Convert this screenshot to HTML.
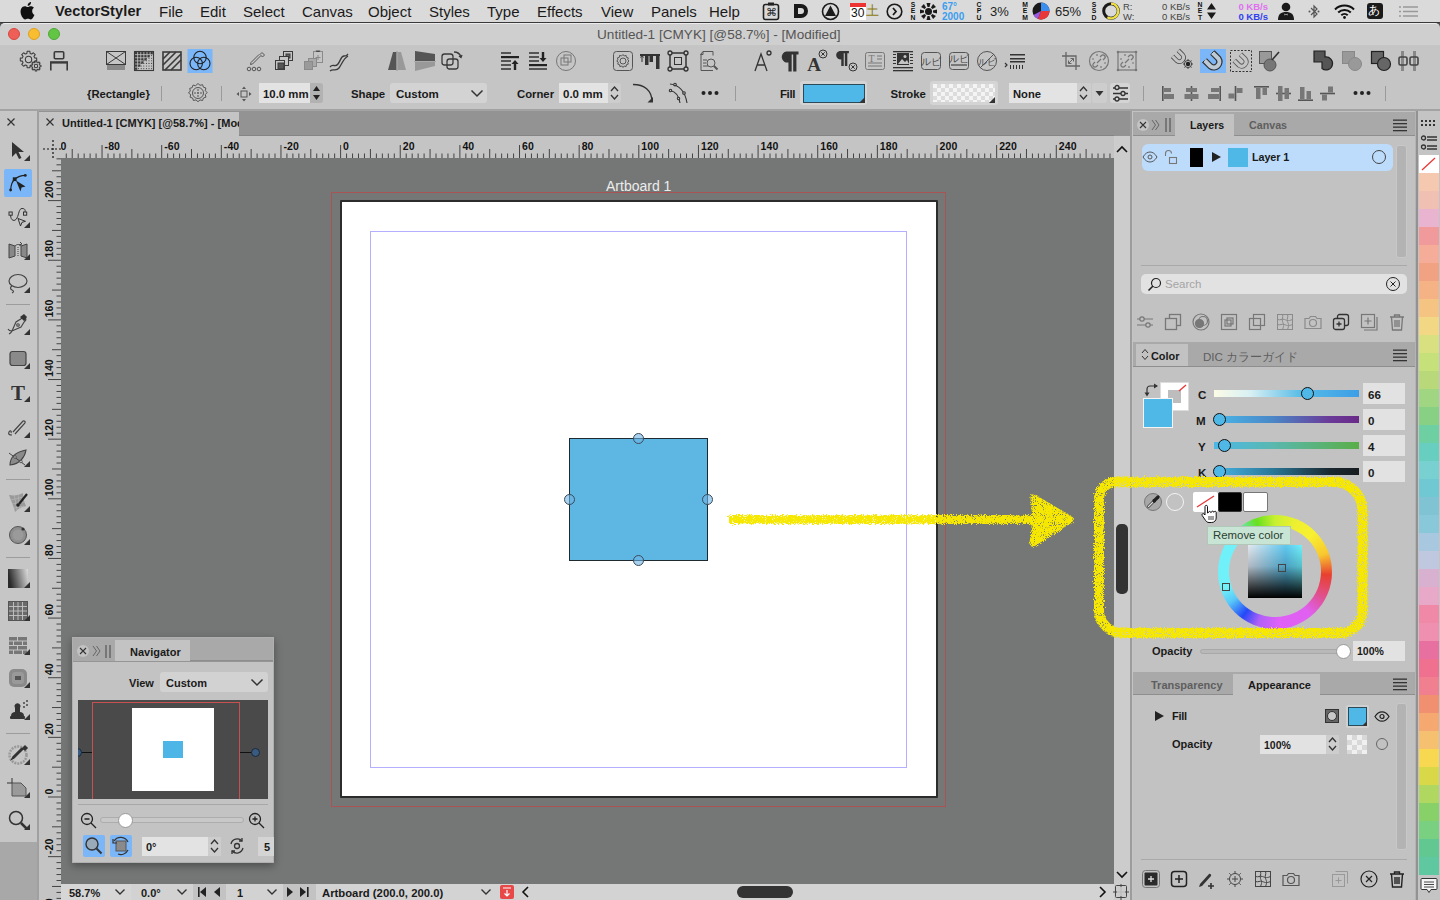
<!DOCTYPE html>
<html><head><meta charset="utf-8">
<style>
*{margin:0;padding:0;box-sizing:border-box}
html,body{width:1440px;height:900px;overflow:hidden;background:#757776}
body{font-family:"Liberation Sans",sans-serif;color:#111;position:relative}
.a{position:absolute}
.t{position:absolute;white-space:nowrap;line-height:1}
svg{position:absolute;overflow:visible}
</style></head><body>

<!-- MENUBAR -->
<div class="a" id="menubar" style="left:0;top:0;width:1440px;height:22px;background:#dadada"></div>
<div class="a" style="left:0;top:22px;width:1440px;height:1px;background:#3a3a3a"></div>


<!-- menubar content -->
<svg style="left:20px;top:2px" width="15" height="17" viewBox="0 0 170 200"><path fill="#111" d="M140 106c0-24 20-36 21-37-12-17-30-19-36-19-15-2-30 9-38 9s-20-9-33-9C37 50 21 60 12 76c-18 31-5 78 13 103 9 12 19 26 32 26 13-1 18-8 33-8s20 8 33 8 22-13 30-25c10-14 14-28 14-29-1 0-27-10-27-45zM116 32c7-8 11-20 10-32-10 0-22 7-29 15-6 7-12 19-10 30 11 1 22-5 29-13z"/></svg>
<div class="t" style="left:55px;top:4px;font-size:14.6px;font-weight:bold;letter-spacing:0.1px;color:#1a1a1a">VectorStyler</div>
<div class="t" style="left:159px;top:4px;font-size:15px;color:#1a1a1a">File</div>
<div class="t" style="left:200px;top:4px;font-size:15px;color:#1a1a1a">Edit</div>
<div class="t" style="left:243px;top:4px;font-size:15px;color:#1a1a1a">Select</div>
<div class="t" style="left:302px;top:4px;font-size:15px;color:#1a1a1a">Canvas</div>
<div class="t" style="left:368px;top:4px;font-size:15px;color:#1a1a1a">Object</div>
<div class="t" style="left:429px;top:4px;font-size:15px;color:#1a1a1a">Styles</div>
<div class="t" style="left:487px;top:4px;font-size:15px;color:#1a1a1a">Type</div>
<div class="t" style="left:537px;top:4px;font-size:15px;color:#1a1a1a">Effects</div>
<div class="t" style="left:601px;top:4px;font-size:15px;color:#1a1a1a">View</div>
<div class="t" style="left:651px;top:4px;font-size:15px;color:#1a1a1a">Panels</div>
<div class="t" style="left:709px;top:4px;font-size:15px;color:#1a1a1a">Help</div>
<!-- status icons -->
<svg style="left:762px;top:2px" width="18" height="18" viewBox="0 0 18 18"><rect x="1.5" y="2.5" width="15" height="15" rx="2" fill="none" stroke="#222" stroke-width="1.6"/><rect x="6" y="0.5" width="6" height="3" fill="#222"/><text x="9" y="14" font-size="11" text-anchor="middle" fill="#222" font-family="Liberation Sans">&#8984;</text></svg>
<svg style="left:793px;top:3px" width="16" height="16" viewBox="0 0 16 16"><path d="M1 1h7a7 7 0 0 1 0 14H1z" fill="#1a1a1a"/><path d="M5 5h3a3 3 0 0 1 0 6H5z" fill="#dadada"/></svg>
<svg style="left:821px;top:2px" width="19" height="19" viewBox="0 0 19 19"><circle cx="9.5" cy="9.5" r="8" fill="none" stroke="#1a1a1a" stroke-width="1.6"/><path d="M9.5 3.5L15 14H4z" fill="#1a1a1a"/></svg>
<div class="a" style="left:850px;top:3px;width:16px;height:17px;background:#fff"></div>
<div class="a" style="left:850px;top:3px;width:16px;height:4px;background:#e33"></div>
<div class="t" style="left:851px;top:7px;font-size:12px;color:#111">30</div>
<div class="t" style="left:866px;top:4px;font-size:13px;color:#8a7a10">&#22303;</div>
<svg style="left:886px;top:3px" width="17" height="17" viewBox="0 0 17 17"><circle cx="8.5" cy="8.5" r="7.3" fill="none" stroke="#1a1a1a" stroke-width="1.6"/><path d="M7 5l3 3.5-3 3.5" fill="none" stroke="#1a1a1a" stroke-width="1.8"/></svg>
<div class="t" style="left:910px;top:2px;font-size:6.8px;font-weight:bold;line-height:6.3px;color:#111;width:6px;text-align:center">S<br>E<br>N</div>
<svg style="left:919px;top:2px" width="19" height="19" viewBox="0 0 19 19"><g fill="#1a1a1a"><circle cx="9.5" cy="9.5" r="3.5"/><g transform="translate(9.5 9.5)"><path d="M-2 -8.5h4l-1 4h-2z"/><path transform="rotate(45)" d="M-2 -8.5h4l-1 4h-2z"/><path transform="rotate(90)" d="M-2 -8.5h4l-1 4h-2z"/><path transform="rotate(135)" d="M-2 -8.5h4l-1 4h-2z"/><path transform="rotate(180)" d="M-2 -8.5h4l-1 4h-2z"/><path transform="rotate(225)" d="M-2 -8.5h4l-1 4h-2z"/><path transform="rotate(270)" d="M-2 -8.5h4l-1 4h-2z"/><path transform="rotate(315)" d="M-2 -8.5h4l-1 4h-2z"/></g></g></svg>
<div class="t" style="left:942px;top:2px;font-size:10px;font-weight:bold;line-height:10px;color:#3a9ef0">67&#176;<br>2000</div>
<div class="t" style="left:976px;top:2px;font-size:6.8px;font-weight:bold;line-height:6.3px;color:#111;width:6px;text-align:center">C<br>P<br>U</div>
<div class="t" style="left:990px;top:5px;font-size:13px;color:#222">3%</div>
<div class="t" style="left:1022px;top:2px;font-size:6.8px;font-weight:bold;line-height:6.3px;color:#111;width:6px;text-align:center">M<br>E<br>M</div>
<svg style="left:1032px;top:2px" width="18" height="18" viewBox="0 0 18 18"><circle cx="9" cy="9" r="8.5" fill="#1a1a1a"/><path d="M9 9V0.5A8.5 8.5 0 0 1 17.5 9z" fill="#3a8ef0"/><path d="M9 9H17.5A8.5 8.5 0 0 1 6 17z" fill="#e8383a"/><path d="M9 9L6 17A8.5 8.5 0 0 1 1.5 13z" fill="#9a5ae0"/></svg>
<div class="t" style="left:1055px;top:5px;font-size:13px;color:#222">65%</div>
<div class="t" style="left:1091px;top:2px;font-size:6.8px;font-weight:bold;line-height:6.3px;color:#111;width:6px;text-align:center">S<br>S<br>D</div>
<svg style="left:1102px;top:2px" width="18" height="18" viewBox="0 0 18 18"><circle cx="9" cy="9" r="7.3" fill="none" stroke="#1a1a1a" stroke-width="3"/><path d="M9 1.7A7.3 7.3 0 1 1 5.35 15.32" fill="none" stroke="#f0e040" stroke-width="2.2"/></svg>
<div class="t" style="left:1123px;top:2px;font-size:9.5px;line-height:9.5px;color:#444">R:<br>W:</div>
<div class="t" style="left:1160px;top:2px;font-size:9.5px;line-height:9.5px;color:#444;text-align:right;width:30px">0 KB/s<br>0 KB/s</div>
<div class="t" style="left:1197px;top:2px;font-size:6.8px;font-weight:bold;line-height:6.3px;color:#111;width:6px;text-align:center">N<br>E<br>T</div>
<svg style="left:1207px;top:3px" width="9" height="16" viewBox="0 0 9 16"><path d="M4.5 0L9 6.5H0z M0 9.5H9L4.5 16z" fill="#1a1a1a"/></svg>
<div class="t" style="left:1236px;top:2px;font-size:9.5px;font-weight:bold;line-height:9.5px;text-align:right;width:32px"><span style="color:#e070f0">0 KB/s</span><br><span style="color:#3040f0">0 KB/s</span></div>
<svg style="left:1277px;top:2px" width="18" height="18" viewBox="0 0 18 18"><circle cx="9" cy="5" r="4.3" fill="#1a1a1a"/><path d="M1 18c0-6 3-8 8-8s8 2 8 8z" fill="#1a1a1a"/><path d="M7.5 11.5l1.5 1 1.5-1v2l-1.5-1-1.5 1z" fill="#dadada"/></svg>
<svg style="left:1308px;top:4px" width="12" height="15" viewBox="0 0 12 15"><path d="M3 4l6 6-3 3V2l3 3-6 6" fill="none" stroke="#555" stroke-width="1.2"/><circle cx="1.5" cy="7.5" r="1" fill="#555"/><circle cx="10.5" cy="7.5" r="1" fill="#555"/></svg>
<svg style="left:1334px;top:4px" width="21" height="15" viewBox="0 0 21 15"><path d="M1 5.5a13.5 13.5 0 0 1 19 0" fill="none" stroke="#111" stroke-width="2"/><path d="M4.2 8.5a9 9 0 0 1 12.6 0" fill="none" stroke="#111" stroke-width="2"/><path d="M7.3 11.3a4.6 4.6 0 0 1 6.4 0" fill="none" stroke="#111" stroke-width="2"/><circle cx="10.5" cy="13.5" r="1.4" fill="#111"/></svg>
<div class="a" style="left:1367px;top:3px;width:16px;height:16px;background:#1a1a1a;border-radius:3px"></div>
<div class="t" style="left:1368px;top:4px;font-size:12px;color:#fff">&#12354;</div>
<svg style="left:1399px;top:6px" width="19" height="11" viewBox="0 0 19 11"><g stroke="#999" stroke-width="1.3"><path d="M0 1h2M4 1h15M0 5.5h2M4 5.5h15M0 10h2M4 10h15"/></g></svg>

<!-- WINDOW TITLE -->
<div class="a" style="left:0;top:23px;width:1440px;height:6px;background:#505050"></div>
<div class="a" style="left:0;top:23px;width:1440px;height:22px;background:#cfcfcf;border-radius:5px 5px 0 0;border-top:1px solid #ececec"></div>


<!-- title content -->
<div class="a" style="left:8px;top:28px;width:12px;height:12px;border-radius:50%;background:#ee5f57;border:0.5px solid #d8473f"></div>
<div class="a" style="left:28px;top:28px;width:12px;height:12px;border-radius:50%;background:#f8bd30;border:0.5px solid #dea123"></div>
<div class="a" style="left:48px;top:28px;width:12px;height:12px;border-radius:50%;background:#62c544;border:0.5px solid #50a935"></div>
<div class="t" style="left:597px;top:28px;font-size:13.6px;color:#555">Untitled-1 [CMYK] [@58.7%] - [Modified]</div>

<!-- TOOLBAR -->
<div class="a" style="left:0;top:45px;width:1440px;height:64px;background:#c5c5c5"></div>
<div class="a" style="left:0;top:109px;width:1440px;height:2px;background:#a3a3a3"></div>

<!-- TB1 -->
<svg style="left:18.0px;top:48px" width="26" height="26" viewBox="0 0 26 26"><g fill="none" stroke="#3a3a3a" stroke-width="1.05" stroke-linejoin="round"><path d="M16.59 9.89L18.69 10.14L18.69 12.86L16.59 13.11L15.95 14.66L17.25 16.33L15.33 18.25L13.66 16.95L12.11 17.59L11.86 19.69L9.14 19.69L8.89 17.59L7.34 16.95L5.67 18.25L3.75 16.33L5.05 14.66L4.41 13.11L2.31 12.86L2.31 10.14L4.41 9.89L5.05 8.34L3.75 6.67L5.67 4.75L7.34 6.05L8.89 5.41L9.14 3.31L11.86 3.31L12.11 5.41L13.66 6.05L15.33 4.75L17.25 6.67L15.95 8.34z" fill="#c5c5c5"/><circle cx="10.5" cy="11.5" r="3.2"/><path d="M21.58 17.05L22.93 17.18L22.93 18.82L21.58 18.95L21.20 19.86L22.07 20.91L20.91 22.07L19.86 21.20L18.95 21.58L18.82 22.93L17.18 22.93L17.05 21.58L16.14 21.20L15.09 22.07L13.93 20.91L14.80 19.86L14.42 18.95L13.07 18.82L13.07 17.18L14.42 17.05L14.80 16.14L13.93 15.09L15.09 13.93L16.14 14.80L17.05 14.42L17.18 13.07L18.82 13.07L18.95 14.42L19.86 14.80L20.91 13.93L22.07 15.09L21.20 16.14z" fill="#c5c5c5"/><circle cx="18" cy="18" r="1.7"/></g></svg>
<svg style="left:46.0px;top:48px" width="26" height="26" viewBox="0 0 26 26"><g fill="none" stroke="#3a3a3a" stroke-width="1.6"><rect x="8.3" y="3.8" width="9.4" height="7" rx="1"/><path d="M4.8 22.5v-8.3h16.4v8.3"/></g><rect x="4" y="13.4" width="18" height="2.2" fill="#3a3a3a"/></svg>
<svg style="left:102.5px;top:48px" width="26" height="26" viewBox="0 0 26 26"><g fill="none" stroke="#3a3a3a" stroke-width="1"><rect x="3.5" y="3.5" width="19" height="13"/><path d="M3.5 3.5l19 13M22.5 3.5l-19 13"/></g><rect x="4" y="17" width="18" height="5" fill="#8a8a8a"/></svg>
<svg style="left:130.5px;top:48px" width="26" height="26" viewBox="0 0 26 26"><rect x="3.5" y="3.5" width="19" height="19" fill="none" stroke="#3a3a3a" stroke-width="1.1"/><rect x="4.0" y="4.0" width="2.3" height="2.3" fill="#3a3a3a"/><rect x="4.0" y="7.1" width="2.3" height="2.3" fill="#3a3a3a"/><rect x="4.0" y="10.2" width="2.3" height="2.3" fill="#3a3a3a"/><rect x="4.0" y="13.3" width="2.3" height="2.3" fill="#3a3a3a"/><rect x="4.0" y="16.4" width="2.3" height="2.3" fill="#3a3a3a"/><rect x="4.0" y="19.5" width="2.3" height="2.3" fill="#3a3a3a"/><rect x="7.1" y="4.0" width="2.3" height="2.3" fill="#3a3a3a"/><rect x="7.1" y="7.1" width="2.3" height="2.3" fill="#3a3a3a"/><rect x="7.1" y="10.2" width="2.3" height="2.3" fill="#3a3a3a"/><rect x="7.1" y="13.3" width="2.3" height="2.3" fill="#3a3a3a"/><rect x="7.1" y="16.4" width="2.3" height="2.3" fill="#3a3a3a"/><rect x="10.2" y="4.0" width="2.3" height="2.3" fill="#3a3a3a"/><rect x="10.2" y="7.1" width="2.3" height="2.3" fill="#3a3a3a"/><rect x="10.2" y="10.2" width="2.3" height="2.3" fill="#3a3a3a"/><rect x="10.2" y="13.3" width="2.3" height="2.3" fill="#3a3a3a"/><rect x="13.3" y="4.0" width="2.3" height="2.3" fill="#3a3a3a"/><rect x="13.3" y="7.1" width="2.3" height="2.3" fill="#3a3a3a"/><rect x="13.3" y="10.2" width="2.3" height="2.3" fill="#3a3a3a"/><rect x="16.4" y="4.0" width="2.3" height="2.3" fill="#3a3a3a"/><rect x="16.4" y="7.1" width="2.3" height="2.3" fill="#3a3a3a"/><rect x="19.5" y="4.0" width="2.3" height="2.3" fill="#3a3a3a"/><circle cx="5.0" cy="20.6" r="0.55" fill="#3a3a3a"/><circle cx="7.6" cy="18.0" r="0.55" fill="#3a3a3a"/><circle cx="7.6" cy="20.6" r="0.55" fill="#3a3a3a"/><circle cx="10.2" cy="15.4" r="0.55" fill="#3a3a3a"/><circle cx="10.2" cy="18.0" r="0.55" fill="#3a3a3a"/><circle cx="10.2" cy="20.6" r="0.55" fill="#3a3a3a"/><circle cx="12.8" cy="12.8" r="0.55" fill="#3a3a3a"/><circle cx="12.8" cy="15.4" r="0.55" fill="#3a3a3a"/><circle cx="12.8" cy="18.0" r="0.55" fill="#3a3a3a"/><circle cx="12.8" cy="20.6" r="0.55" fill="#3a3a3a"/><circle cx="15.4" cy="10.2" r="0.55" fill="#3a3a3a"/><circle cx="15.4" cy="12.8" r="0.55" fill="#3a3a3a"/><circle cx="15.4" cy="15.4" r="0.55" fill="#3a3a3a"/><circle cx="15.4" cy="18.0" r="0.55" fill="#3a3a3a"/><circle cx="15.4" cy="20.6" r="0.55" fill="#3a3a3a"/><circle cx="18.0" cy="7.6" r="0.55" fill="#3a3a3a"/><circle cx="18.0" cy="10.2" r="0.55" fill="#3a3a3a"/><circle cx="18.0" cy="12.8" r="0.55" fill="#3a3a3a"/><circle cx="18.0" cy="15.4" r="0.55" fill="#3a3a3a"/><circle cx="18.0" cy="18.0" r="0.55" fill="#3a3a3a"/><circle cx="18.0" cy="20.6" r="0.55" fill="#3a3a3a"/><circle cx="20.6" cy="5.0" r="0.55" fill="#3a3a3a"/><circle cx="20.6" cy="7.6" r="0.55" fill="#3a3a3a"/><circle cx="20.6" cy="10.2" r="0.55" fill="#3a3a3a"/><circle cx="20.6" cy="12.8" r="0.55" fill="#3a3a3a"/><circle cx="20.6" cy="15.4" r="0.55" fill="#3a3a3a"/><circle cx="20.6" cy="18.0" r="0.55" fill="#3a3a3a"/><circle cx="20.6" cy="20.6" r="0.55" fill="#3a3a3a"/></svg>
<svg style="left:158.5px;top:48px" width="26" height="26" viewBox="0 0 26 26"><g fill="none" stroke="#3a3a3a" stroke-width="1.6"><rect x="4" y="4" width="18" height="18"/><path d="M4 11L11 4M4 17L17 4M6 22L22 6M12 22l10-10"/></g></svg>
<svg style="left:186.5px;top:48px" width="26" height="26" viewBox="0 0 26 26"><rect x="0.5" y="1" width="25" height="24" fill="#7ab6f8"/><g fill="none" stroke="#222" stroke-width="1.1"><circle cx="13" cy="9.5" r="6.2"/><circle cx="9.2" cy="15.5" r="6.2"/><circle cx="16.8" cy="15.5" r="6.2"/></g></svg>
<svg style="left:243.3px;top:48px" width="26" height="26" viewBox="0 0 26 26"><g fill="none" stroke="#555" stroke-width="1"><path d="M19 4.5l2.5 2.5-2 2-2.5-2.5zM17.5 8l-8 8-2 .5.5-2 8-8"/><circle cx="6" cy="21" r="1.8"/><circle cx="11" cy="21" r="1.8"/><circle cx="16" cy="21" r="1.8"/></g></svg>
<svg style="left:271.0px;top:48px" width="26" height="26" viewBox="0 0 26 26"><g stroke="#3a3a3a" stroke-width="1"><rect x="12.5" y="3.5" width="9" height="9" fill="#c5c5c5"/><rect x="15" y="6" width="4" height="4" fill="#666"/><rect x="8.5" y="8.5" width="9" height="9" fill="#c5c5c5"/><rect x="4.5" y="12.5" width="9" height="9" fill="#c5c5c5"/><rect x="7" y="15" width="6" height="6" fill="#555"/></g></svg>
<svg style="left:299.5px;top:48px" width="26" height="26" viewBox="0 0 26 26"><g stroke="#8a8a8a" stroke-width="1"><rect x="13.5" y="3.5" width="9" height="11" fill="#c5c5c5"/><path d="M16 3.5v-1h4v1M18 7v5M15.5 9.5h5"/><rect x="8.5" y="10.5" width="8" height="8" fill="#aaa"/><rect x="4.5" y="13.5" width="8" height="8" fill="#9a9a9a"/></g></svg>
<svg style="left:326.0px;top:48px" width="26" height="26" viewBox="0 0 26 26"><g fill="none" stroke="#3a3a3a" stroke-width="1.3"><path d="M4 19c3-4 5 1 8-3s3-8 6-8 2 0 4-2M4 23c3-3 6 1 9-3s4-9 9-12"/></g></svg>
<svg style="left:383.7px;top:48px" width="26" height="26" viewBox="0 0 26 26"><path d="M4 22L9 4h3.5v18z" fill="#555"/><path d="M13.5 4H17l5 18h-8.5z" fill="#999"/><path d="M13 3v20" stroke="#999" stroke-width="1"/></svg>
<svg style="left:412.0px;top:48px" width="26" height="26" viewBox="0 0 26 26"><path d="M3 3l20 3v7H3z" fill="#555"/><path d="M3 14h20v4L3 23z" fill="#999"/><path d="M2 13.5h22" stroke="#aaa" stroke-width="1"/></svg>
<svg style="left:438.7px;top:48px" width="26" height="26" viewBox="0 0 26 26"><g fill="none" stroke="#3a3a3a" stroke-width="1.3"><rect x="3" y="6" width="11" height="11" rx="2.5"/><rect x="8" y="11" width="11" height="10" rx="2.5"/><path d="M15 4c4 0 6 2 7 5"/><path d="M20 8l2 1.5 1-2.5"/></g></svg>
<svg style="left:496.7px;top:48px" width="26" height="26" viewBox="0 0 26 26"><g fill="#555"><rect x="4" y="4" width="10" height="2"/><rect x="4" y="8" width="18" height="2.2" fill="#222"/><rect x="4" y="12" width="10" height="2"/><rect x="4" y="16" width="10" height="2"/><rect x="4" y="20" width="10" height="2"/><path d="M18 12l3.5 4h-2.3v6h-2.4v-6h-2.3z" fill="#222"/></g></svg>
<svg style="left:524.5px;top:48px" width="26" height="26" viewBox="0 0 26 26"><g fill="#555"><rect x="4" y="4" width="10" height="2"/><rect x="4" y="8" width="10" height="2"/><rect x="4" y="16" width="18" height="2.2" fill="#222"/><rect x="4" y="12" width="10" height="2"/><rect x="4" y="20" width="18" height="2"/><path d="M18 14l3.5-4h-2.3V4h-2.4v6h-2.3z" fill="#222"/></g></svg>
<svg style="left:552.8px;top:48px" width="26" height="26" viewBox="0 0 26 26"><g fill="none" stroke="#777" stroke-width="1"><circle cx="13" cy="13" r="9.5"/><rect x="8" y="10" width="7" height="7"/><rect x="11" y="7" width="7" height="7"/></g></svg>
<svg style="left:609.5px;top:48px" width="26" height="26" viewBox="0 0 26 26"><g fill="none" stroke="#555" stroke-width="1"><rect x="3.5" y="3.5" width="19" height="19" rx="3"/><circle cx="13" cy="13" r="3"/><path d="M13 6.5l1.2 1.5 1.9-.6.3 1.9 1.9.6-.6 1.9 1.3 1.2-1.3 1.2.6 1.9-1.9.6-.3 1.9-1.9-.6-1.2 1.5-1.2-1.5-1.9.6-.3-1.9-1.9-.6.6-1.9L6.7 13 8 11.8l-.6-1.9 1.9-.6.3-1.9 1.9.6z"/></g></svg>
<svg style="left:637.0px;top:48px" width="26" height="26" viewBox="0 0 26 26"><g fill="#333"><rect x="3" y="6" width="20" height="2"/><rect x="8" y="7" width="3.5" height="10"/><rect x="12.5" y="7" width="3.5" height="7"/><rect x="19" y="7" width="3.5" height="14"/><path d="M5 8v6M3.5 9.5L5 7.5l1.5 2" stroke="#333" stroke-width="1" fill="none"/></g></svg>
<svg style="left:665.3px;top:48px" width="26" height="26" viewBox="0 0 26 26"><g fill="none" stroke="#333" stroke-width="1.5"><rect x="5" y="5" width="16" height="16"/><rect x="9.5" y="9.5" width="7" height="7" stroke-width="1"/></g><g fill="#c5c5c5" stroke="#333" stroke-width="1.3"><circle cx="5" cy="5" r="2"/><circle cx="21" cy="5" r="2"/><circle cx="5" cy="21" r="2"/><circle cx="21" cy="21" r="2"/></g></svg>
<svg style="left:694.5px;top:48px" width="26" height="26" viewBox="0 0 26 26"><g fill="none" stroke="#555" stroke-width="1"><path d="M8 3.5h10v4M6 6.5v16h12"/><path d="M8 3.5L5.5 6.5h2.5z"/><path d="M8 12h4M8 15h3M8 18h5"/><circle cx="16" cy="15" r="4"/><path d="M19 18l3.5 3.5" stroke-width="2"/></g></svg>
<svg style="left:749.5px;top:48px" width="26" height="26" viewBox="0 0 26 26"><g fill="none" stroke="#333" stroke-width="1.3"><path d="M5 23L11 6l6 17M7.5 17h7"/><circle cx="19" cy="5" r="2"/></g></svg>
<svg style="left:777.8px;top:48px" width="26" height="26" viewBox="0 0 26 26"><g transform="translate(1.5 3.5) scale(0.95)"><path d="M7 0h13v3.2h-2.2V21h-3.4V3.2h-1.6V21H9.4V11.5A5.8 5.8 0 0 1 7 0z" fill="#333"/></g></svg>
<svg style="left:803.7px;top:48px" width="26" height="26" viewBox="0 0 26 26"><text x="10" y="23" font-family="Liberation Serif" font-weight="bold" font-size="19" text-anchor="middle" fill="#333">A</text><g fill="none" stroke="#333" stroke-width="1"><circle cx="19" cy="6" r="4"/><path d="M17.3 4.3l3.4 3.4M20.7 4.3l-3.4 3.4"/></g></svg>
<svg style="left:833.7px;top:48px" width="26" height="26" viewBox="0 0 26 26"><g transform="translate(0.5 3) scale(0.72)"><path d="M7 0h13v3.2h-2.2V21h-3.4V3.2h-1.6V21H9.4V11.5A5.8 5.8 0 0 1 7 0z" fill="#333"/></g><g fill="none" stroke="#333" stroke-width="1"><circle cx="19" cy="19" r="4"/><path d="M17.3 17.3l3.4 3.4M20.7 17.3l-3.4 3.4"/></g></svg>
<svg style="left:862.0px;top:48px" width="26" height="26" viewBox="0 0 26 26"><g fill="none" stroke="#777" stroke-width="1"><rect x="3.5" y="4.5" width="19" height="17" rx="2"/><path d="M15 8h5M15 11h5M6 15h14M6 18h14"/></g><text x="9.5" y="14" font-family="Liberation Serif" font-size="10" text-anchor="middle" fill="#777">T</text></svg>
<svg style="left:890.0px;top:48px" width="26" height="26" viewBox="0 0 26 26"><g fill="#333"><rect x="3" y="3" width="20" height="1.3"/><rect x="3" y="19" width="20" height="1.3"/><rect x="3" y="22" width="20" height="1.3"/><rect x="3" y="6" width="3" height="1"/><rect x="20" y="6" width="3" height="1"/><rect x="3" y="9" width="3" height="1"/><rect x="20" y="9" width="3" height="1"/><rect x="3" y="12" width="3" height="1"/><rect x="20" y="12" width="3" height="1"/><rect x="3" y="15" width="3" height="1"/><rect x="20" y="15" width="3" height="1"/><rect x="7" y="5" width="12" height="12"/></g><path d="M8 16l4-5 3 3 2-2 2 4z" fill="#c5c5c5"/><circle cx="15" cy="8.5" r="1.5" fill="#c5c5c5"/></svg>
<svg style="left:917.8px;top:48px" width="26" height="26" viewBox="0 0 26 26"><rect x="3.5" y="4.5" width="19" height="17" rx="3" fill="none" stroke="#555" stroke-width="1"/><text x="13" y="17" font-size="10" text-anchor="middle" fill="#444">&#12523;&#12499;</text></svg>
<svg style="left:946.0px;top:48px" width="26" height="26" viewBox="0 0 26 26"><rect x="3.5" y="4.5" width="19" height="17" rx="3" fill="none" stroke="#555" stroke-width="1"/><text x="13" y="14" font-size="10" text-anchor="middle" fill="#444">&#12523;&#12499;</text><rect x="5" y="16" width="16" height="2" fill="#777"/></svg>
<svg style="left:973.7px;top:48px" width="26" height="26" viewBox="0 0 26 26"><circle cx="13" cy="13" r="9.5" fill="none" stroke="#555" stroke-width="1"/><text x="13" y="17" font-size="9" text-anchor="middle" fill="#444">&#12523;&#12499;</text><path d="M6 20L20 6" stroke="#555" stroke-width="1"/></svg>
<svg style="left:1002.0px;top:48px" width="26" height="26" viewBox="0 0 26 26"><g fill="#333"><rect x="8" y="6" width="15" height="1.5"/><rect x="8" y="10" width="15" height="1.5"/><path d="M8 13h15v1.5H8z"/><rect x="8" y="17" width="1" height="4"/><rect x="11" y="17" width="1" height="4"/><rect x="14" y="17" width="1" height="4"/><rect x="17" y="17" width="1" height="4"/><rect x="20" y="17" width="1" height="4"/><path d="M3 15l2 2-2 2" stroke="#333" fill="none" stroke-width="1.2"/></g></svg>
<svg style="left:1057.8px;top:48px" width="26" height="26" viewBox="0 0 26 26"><g fill="none" stroke="#666" stroke-width="1.3"><path d="M8 4v14h14M4 8h14v14"/><path d="M10.5 15.5l5-5M10.5 12.5v3h3M12.5 10.5h3v3" stroke-width="1"/></g></svg>
<svg style="left:1086.0px;top:48px" width="26" height="26" viewBox="0 0 26 26"><g fill="none" stroke="#777" stroke-width="1.2"><circle cx="13" cy="13" r="9.5"/><path d="M9 14l-1.5 1.5a2 2 0 0 0 3 3L12 17M17 12l1.5-1.5a2 2 0 0 0-3-3L14 9M11 15l4-4M8 11H6M11 8V6M15 18v2M18 15h2"/></g></svg>
<svg style="left:1113.7px;top:48px" width="26" height="26" viewBox="0 0 26 26"><g fill="none" stroke="#777" stroke-width="1.2"><rect x="4" y="4" width="18" height="18"/><path d="M9 14l-1.5 1.5a2 2 0 0 0 3 3L12 17M17 12l1.5-1.5a2 2 0 0 0-3-3L14 9M11 15l4-4M8 11H6M11 8V6M15 18v2M18 15h2"/></g><g fill="#777"><circle cx="4" cy="4" r="1.3"/><circle cx="22" cy="4" r="1.3"/><circle cx="4" cy="22" r="1.3"/><circle cx="22" cy="22" r="1.3"/></g></svg>
<svg style="left:1171.2px;top:48px" width="26" height="26" viewBox="0 0 26 26"><g transform="translate(-2 -1) scale(0.75)"><path d="M12.4 4.6L18.4 10.6A5.6 5.6 0 0 1 10.6 18.4L4.6 12.4" fill="none" stroke="#444" stroke-width="6"/><path d="M12.4 4.6L18.4 10.6A5.6 5.6 0 0 1 10.6 18.4L4.6 12.4" fill="none" stroke="#c5c5c5" stroke-width="4"/></g><g fill="none" stroke="#444" stroke-width="1"><circle cx="17" cy="16" r="3.6"/><path d="M17 11v1.5M17 19.5V21M12 16h1.5M20.5 16H22M13.5 12.5l1 1M19.5 18.5l1 1M13.5 19.5l1-1M19.5 13.5l1-1"/></g><circle cx="17" cy="16" r="2.2" fill="#222"/></svg>
<svg style="left:1199.8px;top:48px" width="26" height="26" viewBox="0 0 26 26"><rect x="0" y="1" width="26" height="24" fill="#7ab6f8"/><path d="M12.4 4.6L18.4 10.6A5.6 5.6 0 0 1 10.6 18.4L4.6 12.4" fill="none" stroke="#333" stroke-width="6.4"/><path d="M12.4 4.6L18.4 10.6A5.6 5.6 0 0 1 10.6 18.4L4.6 12.4" fill="none" stroke="#bccad8" stroke-width="4"/><path d="M11.5 5.5l2.2-2.2M4.5 12.5l-2.2 2.2" stroke="#333" stroke-width="1"/></svg>
<svg style="left:1228.0px;top:48px" width="26" height="26" viewBox="0 0 26 26"><rect x="2.5" y="2.5" width="21" height="21" fill="none" stroke="#333" stroke-width="1" stroke-dasharray="2 1.5"/><g transform="translate(13 13) scale(0.8) translate(-13 -13)"><path d="M12.4 4.6L18.4 10.6A5.6 5.6 0 0 1 10.6 18.4L4.6 12.4" fill="none" stroke="#555" stroke-width="6"/><path d="M12.4 4.6L18.4 10.6A5.6 5.6 0 0 1 10.6 18.4L4.6 12.4" fill="none" stroke="#c5c5c5" stroke-width="4"/></g></svg>
<svg style="left:1255.8px;top:48px" width="26" height="26" viewBox="0 0 26 26"><rect x="3.5" y="3.5" width="12" height="12" fill="#999" stroke="#555" stroke-width="1"/><circle cx="14" cy="17" r="6" fill="#777" stroke="#555" stroke-width="1"/><path d="M16 12L23 4" stroke="#333" stroke-width="1.6"/></svg>
<svg style="left:1311.2px;top:48px" width="26" height="26" viewBox="0 0 26 26"><path d="M3 3h11v6a6.5 6.5 0 1 1-3 11.5V14H3z" fill="#555" stroke="#222" stroke-width="1.2"/></svg>
<svg style="left:1339.4px;top:48px" width="26" height="26" viewBox="0 0 26 26"><rect x="3.5" y="3.5" width="12" height="12" fill="#999" stroke="#888" stroke-width="1"/><circle cx="16" cy="16" r="6.5" fill="#999" stroke="#888" stroke-width="1"/></svg>
<svg style="left:1368.2px;top:48px" width="26" height="26" viewBox="0 0 26 26"><rect x="3.5" y="3.5" width="12" height="12" fill="#666" stroke="#222" stroke-width="1.2"/><circle cx="16" cy="16" r="6.5" fill="#666" stroke="#222" stroke-width="1.2"/></svg>
<svg style="left:1395.8px;top:48px" width="26" height="26" viewBox="0 0 26 26"><g fill="#888"><rect x="5" y="3" width="3" height="20"/><rect x="17" y="3" width="3" height="20"/></g><g fill="none" stroke="#444" stroke-width="1.6"><rect x="3" y="9" width="8" height="8" rx="1.5"/><rect x="14" y="9" width="8" height="8" rx="1.5"/></g></svg>

<!-- /TB1 -->
<!-- TB2 -->
<div class="t" style="left:87px;top:89px;font-size:11px;font-weight:bold;color:#1a1a1a;font-size:11.3px">{Rectangle}</div>
<div class="a" style="left:161px;top:86px;width:1px;height:15px;background:#9a9a9a;"></div>
<svg style="left:187px;top:82px" width="22" height="22" viewBox="0 0 22 22"><g fill="none" stroke="#555" stroke-width="1"><path d="M11 1.5l2 1.8 2.6-.6.8 2.5 2.5.8-.6 2.6 1.8 2-1.8 2 .6 2.6-2.5.8-.8 2.5-2.6-.6-2 1.8-2-1.8-2.6.6-.8-2.5-2.5-.8.6-2.6L1.5 11l1.8-2-.6-2.6 2.5-.8.8-2.5 2.6.6z"/><circle cx="11" cy="11" r="5.5"/></g><g fill="#555"><circle cx="11" cy="11" r="1"/><rect x="10.5" y="7" width="1" height="2"/><rect x="10.5" y="13" width="1" height="2"/><rect x="7" y="10.5" width="2" height="1"/><rect x="13" y="10.5" width="2" height="1"/></g></svg>
<div class="a" style="left:221px;top:86px;width:1px;height:15px;background:#9a9a9a;"></div>
<svg style="left:236px;top:86px" width="16" height="16" viewBox="0 0 16 16"><g fill="#555"><rect x="5" y="5" width="6" height="6" fill="none" stroke="#555" stroke-width="1"/><path d="M8 0.5l2 2.5H6zM8 15.5l2-2.5H6zM0.5 8l2.5 2V6zM15.5 8l-2.5 2V6z"/></g></svg>
<div class="a" style="left:259px;top:83px;width:51px;height:20px;background:#e3e3e3;"></div>
<div class="t" style="left:263px;top:88.5px;font-size:11px;font-weight:bold;color:#1a1a1a;font-size:11.4px">10.0 mm</div>
<div class="a" style="left:310px;top:83px;width:13px;height:20px;background:#b2b2b2;border-radius:0 3px 3px 0"></div>
<svg style="left:311px;top:84px" width="11" height="18" viewBox="0 0 11 18"><path d="M5.5 2L9 7H2zM5.5 16L9 11H2z" fill="#222"/></svg>
<div class="t" style="left:351px;top:88.5px;font-size:11.4px;font-weight:bold;color:#1a1a1a;">Shape</div>
<div class="a" style="left:390px;top:83px;width:97px;height:20px;background:#d3d3d3;border-radius:3px"></div>
<div class="t" style="left:396px;top:88.5px;font-size:11.5px;font-weight:bold;color:#1a1a1a;">Custom</div>
<svg style="left:470px;top:89px" width="14" height="9" viewBox="0 0 14 9"><path d="M1.5 1.5l5.5 5.5 5.5-5.5" fill="none" stroke="#333" stroke-width="1.5"/></svg>
<div class="t" style="left:517px;top:88.5px;font-size:11px;font-weight:bold;color:#1a1a1a;font-size:11.3px">Corner</div>
<div class="a" style="left:559px;top:83px;width:49px;height:20px;background:#e3e3e3;"></div>
<div class="t" style="left:563px;top:88.5px;font-size:11.5px;font-weight:bold;color:#1a1a1a;">0.0 mm</div>
<div class="a" style="left:608px;top:83px;width:13px;height:20px;background:#cdcdcd;border-radius:0 3px 3px 0"></div>
<svg style="left:609px;top:84px" width="11" height="18" viewBox="0 0 11 18"><path d="M2 7l3.5-4L9 7M2 11l3.5 4L9 11" fill="none" stroke="#333" stroke-width="1.3"/></svg>
<svg style="left:630px;top:82px" width="26" height="22" viewBox="0 0 26 22"><path d="M3 2.5C14 2.5 22 8 22 20" fill="none" stroke="#333" stroke-width="1.4"/><path d="M17.5 20.5h5.5v-5.5z" fill="#333"/></svg>
<svg style="left:667px;top:82px" width="24" height="22" viewBox="0 0 24 22"><g fill="none" stroke="#333" stroke-width="1.1"><path d="M3 2c9 1 15 7 17 19M3 8.5c5 1 9 5 10 12.5"/><circle cx="8" cy="2.6" r="1.3" fill="#c5c5c5"/><circle cx="17" cy="11" r="1.3" fill="#c5c5c5"/><circle cx="3.5" cy="8.5" r="1.2" fill="#c5c5c5"/><circle cx="11.5" cy="16.5" r="1.2" fill="#c5c5c5"/></g></svg>
<svg style="left:701px;top:90px" width="18" height="6" viewBox="0 0 18 6"><g fill="#222"><circle cx="2.5" cy="3" r="2"/><circle cx="9" cy="3" r="2"/><circle cx="15.5" cy="3" r="2"/></g></svg>
<div class="a" style="left:735px;top:86px;width:1px;height:15px;background:#9a9a9a;"></div>
<div class="t" style="left:780px;top:88.5px;font-size:11.5px;font-weight:bold;color:#1a1a1a;letter-spacing:-0.4px">Fill</div>
<div class="a" style="left:800px;top:81px;width:67px;height:24px;background:#d4d4d4;border-radius:3px"></div>
<div class="a" style="left:803px;top:84px;width:62px;height:19px;background:#4fb8e8;border:1px solid #2a4a5a"></div>
<svg style="left:859px;top:97px" width="6" height="6" viewBox="0 0 6 6"><path d="M6 0v6H0z" fill="#333"/></svg>
<div class="t" style="left:890.5px;top:88.5px;font-size:11.4px;font-weight:bold;color:#1a1a1a;">Stroke</div>
<div class="a" style="left:930px;top:81px;width:68px;height:24px;background:#d4d4d4;border-radius:3px"></div>
<div class="a" style="left:933px;top:84px;width:62px;height:18px;background:#f4f4f4;background-image:linear-gradient(45deg,#dcdcdc 25%,transparent 25%,transparent 75%,#dcdcdc 75%),linear-gradient(45deg,#dcdcdc 25%,transparent 25%,transparent 75%,#dcdcdc 75%);background-size:8px 8px;background-position:0 0,4px 4px"></div>
<svg style="left:989px;top:97px" width="6" height="6" viewBox="0 0 6 6"><path d="M6 0v6H0z" fill="#333"/></svg>
<div class="a" style="left:1009px;top:83px;width:68px;height:20px;background:#e3e3e3;"></div>
<div class="t" style="left:1013px;top:88.5px;font-size:11px;font-weight:bold;color:#1a1a1a;font-size:11.2px">None</div>
<div class="a" style="left:1077px;top:83px;width:14px;height:20px;background:#cdcdcd;"></div>
<svg style="left:1078px;top:84px" width="11" height="18" viewBox="0 0 11 18"><path d="M2 7l3.5-4L9 7M2 11l3.5 4L9 11" fill="none" stroke="#333" stroke-width="1.3"/></svg>
<div class="a" style="left:1092px;top:83px;width:15px;height:20px;background:#cdcdcd;border-radius:2px"></div>
<svg style="left:1094px;top:90px" width="11" height="7" viewBox="0 0 11 7"><path d="M1.5 1h8L5.5 6z" fill="#333"/></svg>
<div class="a" style="left:1110px;top:83px;width:20px;height:20px;background:#d4d4d4;border-radius:3px"></div>
<svg style="left:1111px;top:84px" width="18" height="18" viewBox="0 0 18 18"><g stroke="#333" stroke-width="1.3" fill="#d4d4d4"><path d="M2 4h15M2 9.5h15M2 15h15"/><circle cx="6" cy="3.5" r="2"/><circle cx="12" cy="9.5" r="2"/><circle cx="6" cy="15" r="2"/></g></svg>
<div class="a" style="left:1143px;top:86px;width:1px;height:15px;background:#9a9a9a;"></div>
<svg style="left:1161.0px;top:85px" width="17" height="17" viewBox="0 0 17 17"><rect x="1" y="1" width="1.6" height="15" fill="#555"/><rect x="3" y="3" width="7" height="4" fill="#777"/><rect x="3" y="9" width="10" height="5" fill="#777"/></svg>
<svg style="left:1182.5px;top:85px" width="17" height="17" viewBox="0 0 17 17"><rect x="7.7" y="1" width="1.6" height="15" fill="#555"/><rect x="3" y="3" width="11" height="4" fill="#777"/><rect x="1.5" y="9" width="14" height="5" fill="#777"/></svg>
<svg style="left:1204.5px;top:85px" width="17" height="17" viewBox="0 0 17 17"><rect x="14.4" y="1" width="1.6" height="15" fill="#555"/><rect x="6" y="3" width="8" height="4" fill="#777"/><rect x="3" y="9" width="11" height="5" fill="#777"/></svg>
<svg style="left:1226.5px;top:85px" width="17" height="17" viewBox="0 0 17 17"><rect x="7.7" y="1" width="1.6" height="15" fill="#555"/><rect x="9.5" y="3" width="6" height="5" fill="#777"/><rect x="1.5" y="8.5" width="6" height="5" fill="#777"/></svg>
<svg style="left:1252.5px;top:85px" width="17" height="17" viewBox="0 0 17 17"><rect x="1" y="1" width="15" height="1.6" fill="#555"/><rect x="3" y="3" width="4.5" height="11" fill="#777"/><rect x="9.5" y="3" width="4.5" height="7" fill="#777"/></svg>
<svg style="left:1274.5px;top:85px" width="17" height="17" viewBox="0 0 17 17"><rect x="1" y="7.7" width="15" height="1.6" fill="#555"/><rect x="3" y="1" width="4.5" height="15" fill="#777"/><rect x="9.5" y="3" width="4.5" height="11" fill="#777"/></svg>
<svg style="left:1296.5px;top:85px" width="17" height="17" viewBox="0 0 17 17"><rect x="1" y="14.4" width="15" height="1.6" fill="#555"/><rect x="3" y="2" width="4.5" height="12" fill="#777"/><rect x="9.5" y="6" width="4.5" height="8" fill="#777"/></svg>
<svg style="left:1319.0px;top:85px" width="17" height="17" viewBox="0 0 17 17"><rect x="1" y="7.7" width="15" height="1.6" fill="#555"/><rect x="9" y="1.5" width="5" height="6" fill="#777"/><rect x="3" y="9.5" width="5" height="6" fill="#777"/></svg>
<svg style="left:1353px;top:90px" width="18" height="6" viewBox="0 0 18 6"><g fill="#222"><circle cx="2.5" cy="3" r="2"/><circle cx="9" cy="3" r="2"/><circle cx="15.5" cy="3" r="2"/></g></svg>
<div class="a" style="left:1385px;top:86px;width:1px;height:15px;background:#9a9a9a;"></div>

<!-- /TB2 -->
<!-- LEFT TOOLS -->
<div class="a" style="left:0;top:111px;width:37px;height:731px;background:#c6c6c6"></div>
<div class="a" style="left:0;top:842px;width:37px;height:58px;background:#a8a8a8"></div>
<div class="a" style="left:37px;top:111px;width:2px;height:789px;background:#a0a0a0"></div>

<!-- LEFTICONS -->
<svg style="left:6px;top:117px" width="10" height="10" viewBox="0 0 10 10"><path d="M1.5 1.5l7 7M8.5 1.5l-7 7" stroke="#333" stroke-width="1.2"/></svg>
<svg style="left:6px;top:139.0px" width="24" height="24" viewBox="0 0 24 24"><path d="M6 3v15l4-4 3 6 2.5-1-3-6h5.5z" fill="#333"/></svg>
<svg style="left:24px;top:155.0px" width="6" height="6" viewBox="0 0 6 6"><path d="M6 0v6H0z" fill="#333"/></svg>
<svg style="left:6px;top:171.0px" width="24" height="24" viewBox="0 0 24 24"><rect x="-2" y="-2" width="28" height="28" rx="2" fill="#7ab6f8"/><g fill="none" stroke="#222" stroke-width="1.2"><path d="M4.6 19C5 14 6.5 10 8.7 8.2"/><path d="M8.7 8.2C12 5.5 16 4.5 19.3 4.4"/></g><path d="M10 9.5L19.5 15.5L15.5 16.5L14.5 20.5z" fill="#222"/><rect x="6.8" y="6.3" width="3.8" height="3.8" fill="#222"/><circle cx="4.6" cy="19" r="1.4" fill="#222"/><circle cx="19.3" cy="4.4" r="1.4" fill="#222"/></svg>
<svg style="left:6px;top:205.5px" width="24" height="24" viewBox="0 0 24 24"><g fill="none" stroke="#333" stroke-width="1"><rect x="3" y="6" width="3.2" height="3.2"/><rect x="17.5" y="6" width="3.2" height="3.2"/><path d="M4.6 9.2C4.6 15 9 16 11 12S13 2.5 16 2.5S19.5 4 19 6"/><path d="M12 12.5L19.5 15.3L16 16.3L14.5 20z" fill="#c6c6c6"/></g></svg>
<svg style="left:24px;top:221.5px" width="6" height="6" viewBox="0 0 6 6"><path d="M6 0v6H0z" fill="#333"/></svg>
<svg style="left:6px;top:238.0px" width="24" height="24" viewBox="0 0 24 24"><g fill="#888" stroke="#444" stroke-width="1"><path d="M3 6l6 2v10l-6 2z"/><path d="M21 6l-6 2v10l6 2z"/></g><path d="M9 8c2-2 4-2 6 0" fill="none" stroke="#444" stroke-width="1"/><path d="M12 9v9" stroke="#444" stroke-dasharray="1 1"/><path d="M14 4l2 2-3 1" fill="none" stroke="#444"/></svg>
<svg style="left:24px;top:254.0px" width="6" height="6" viewBox="0 0 6 6"><path d="M6 0v6H0z" fill="#333"/></svg>
<svg style="left:6px;top:270.5px" width="24" height="24" viewBox="0 0 24 24"><g fill="none" stroke="#444" stroke-width="1.2"><ellipse cx="12" cy="10" rx="9" ry="6.5"/><path d="M6 15c-2 1-2 3 0 4s2 2 0 3"/></g></svg>
<svg style="left:24px;top:286.5px" width="6" height="6" viewBox="0 0 6 6"><path d="M6 0v6H0z" fill="#333"/></svg>
<svg style="left:6px;top:313.0px" width="24" height="24" viewBox="0 0 24 24"><g fill="none" stroke="#444" stroke-width="1.1"><path d="M6 18l4-9 8-5 2 2-5 8-9 4z"/><path d="M16 4l4 4"/><circle cx="12" cy="12" r="1.3"/><path d="M3 21c2-1 3-3 3-3M2 16c1 2 2 2 4 2"/></g><path d="M14 4l4-3 3 3-3 4z" fill="#333"/></svg>
<svg style="left:24px;top:329.0px" width="6" height="6" viewBox="0 0 6 6"><path d="M6 0v6H0z" fill="#333"/></svg>
<svg style="left:6px;top:347.3px" width="24" height="24" viewBox="0 0 24 24"><rect x="4" y="4.5" width="16" height="14" rx="2.5" fill="#8a8a8a" stroke="#444" stroke-width="1.2"/></svg>
<svg style="left:24px;top:363.3px" width="6" height="6" viewBox="0 0 6 6"><path d="M6 0v6H0z" fill="#333"/></svg>
<svg style="left:6px;top:379.7px" width="24" height="24" viewBox="0 0 24 24"><text x="12" y="20" font-family="Liberation Serif" font-weight="bold" font-size="21" text-anchor="middle" fill="#333">T</text></svg>
<svg style="left:24px;top:395.7px" width="6" height="6" viewBox="0 0 6 6"><path d="M6 0v6H0z" fill="#333"/></svg>
<svg style="left:6px;top:416.3px" width="24" height="24" viewBox="0 0 24 24"><g fill="none" stroke="#444" stroke-width="1.2"><path d="M9 18l10-11a1.5 1.5 0 0 0-2-2L7 16M6 19c-3 0-4-1-3-3s3-1 2 1"/></g></svg>
<svg style="left:24px;top:432.3px" width="6" height="6" viewBox="0 0 6 6"><path d="M6 0v6H0z" fill="#333"/></svg>
<svg style="left:6px;top:445.3px" width="24" height="24" viewBox="0 0 24 24"><path d="M4 20c0-8 6-13 16-15-1 7-6 14-16 15z" fill="#8a8a8a" stroke="#444" stroke-width="1.1"/><path d="M3 8l16 12" stroke="#444" stroke-width="1"/><g fill="#c6c6c6" stroke="#444" stroke-width=".8"><circle cx="9" cy="12" r="1.3"/><circle cx="15" cy="16.5" r="1.3"/></g></svg>
<svg style="left:24px;top:461.3px" width="6" height="6" viewBox="0 0 6 6"><path d="M6 0v6H0z" fill="#333"/></svg>
<svg style="left:6px;top:489.7px" width="24" height="24" viewBox="0 0 24 24"><path d="M3 5c6 1 10 0 14-2 0 5 1 9 3 13-5 1-8 3-11 6-1-5-3-9-6-17z" fill="#9a9a9a"/><g stroke="#bbb" stroke-width=".6"><path d="M5 10l12-3M6 14l12-2M8 18l10-2M8 4l3 16M12 4l2 16"/></g><path d="M21 4l-8 10" stroke="#222" stroke-width="2.2"/><circle cx="12" cy="15" r="1.8" fill="#222"/></svg>
<svg style="left:24px;top:505.7px" width="6" height="6" viewBox="0 0 6 6"><path d="M6 0v6H0z" fill="#333"/></svg>
<svg style="left:6px;top:523.0px" width="24" height="24" viewBox="0 0 24 24"><circle cx="12" cy="12" r="8.5" fill="#8e8e8e" stroke="#555" stroke-width="1"/><circle cx="12" cy="12" r="5.5" fill="#9a9a9a"/><circle cx="17" cy="6" r="1.6" fill="#333"/></svg>
<svg style="left:24px;top:539.0px" width="6" height="6" viewBox="0 0 6 6"><path d="M6 0v6H0z" fill="#333"/></svg>
<svg style="left:6px;top:566.3px" width="24" height="24" viewBox="0 0 24 24"><defs><linearGradient id="gg2" x1="0" y1="0.2" x2="1" y2="0"><stop offset="0" stop-color="#2a2a2a"/><stop offset="1" stop-color="#dedede"/></linearGradient></defs><rect x="2" y="3" width="20" height="19" fill="url(#gg2)"/></svg>
<svg style="left:24px;top:582.3px" width="6" height="6" viewBox="0 0 6 6"><path d="M6 0v6H0z" fill="#333"/></svg>
<svg style="left:6px;top:599.0px" width="24" height="24" viewBox="0 0 24 24"><rect x="2" y="2" width="20" height="20" fill="#6a6a6a"/><g stroke="#c4c4c4" stroke-width="0.9"><path d="M3 7.5h18M3 12h18M3 16.5h18M7.5 3v18M12 3v18M16.5 3v18"/></g><rect x="2.5" y="2.5" width="19" height="19" fill="none" stroke="#555" stroke-width="1"/></svg>
<svg style="left:24px;top:615.0px" width="6" height="6" viewBox="0 0 6 6"><path d="M6 0v6H0z" fill="#333"/></svg>
<svg style="left:6px;top:633.0px" width="24" height="24" viewBox="0 0 24 24"><g fill="#777"><rect x="3" y="4" width="8" height="3.5"/><rect x="12" y="4" width="9" height="3.5"/><rect x="3" y="8.5" width="4" height="3.5"/><rect x="8" y="8.5" width="8" height="3.5"/><rect x="17" y="8.5" width="4" height="3.5"/><rect x="3" y="13" width="8" height="3.5"/><rect x="12" y="13" width="9" height="3.5"/><rect x="3" y="17.5" width="4" height="3.5"/><rect x="8" y="17.5" width="8" height="3.5"/><rect x="17" y="17.5" width="4" height="3.5"/></g></svg>
<svg style="left:24px;top:649.0px" width="6" height="6" viewBox="0 0 6 6"><path d="M6 0v6H0z" fill="#333"/></svg>
<svg style="left:6px;top:665.7px" width="24" height="24" viewBox="0 0 24 24"><rect x="3" y="3" width="18" height="18" rx="5" fill="#8a8a8a"/><rect x="6" y="6" width="12" height="12" rx="3" fill="#999"/><rect x="9" y="10" width="6" height="4" fill="#555"/></svg>
<svg style="left:24px;top:681.7px" width="6" height="6" viewBox="0 0 6 6"><path d="M6 0v6H0z" fill="#333"/></svg>
<svg style="left:6px;top:698.0px" width="24" height="24" viewBox="0 0 24 24"><path d="M5 18c0-3 2-4 4-4v-4a3 3 0 1 1 5 0v4c2 0 4 1 4 4z" fill="#333"/><rect x="4" y="18" width="15" height="3" rx="1" fill="#333"/><g fill="#444"><circle cx="18" cy="5" r="1"/><circle cx="21" cy="7" r="1"/><circle cx="18" cy="9" r="1"/><circle cx="21" cy="3" r="1"/></g></svg>
<svg style="left:24px;top:714.0px" width="6" height="6" viewBox="0 0 6 6"><path d="M6 0v6H0z" fill="#333"/></svg>
<svg style="left:6px;top:743.0px" width="24" height="24" viewBox="0 0 24 24"><circle cx="12" cy="12" r="8.5" fill="none" stroke="#999" stroke-width="2.5" stroke-dasharray="2 1"/><path d="M19 3l2 2-2 2-2-2zM17 6l-9 9-2 1 1-2 9-9" fill="#333" stroke="#333" stroke-width="1.5"/></svg>
<svg style="left:24px;top:759.0px" width="6" height="6" viewBox="0 0 6 6"><path d="M6 0v6H0z" fill="#333"/></svg>
<svg style="left:6px;top:776.3px" width="24" height="24" viewBox="0 0 24 24"><path d="M6 7h9l5 5v8H6z" fill="#9a9a9a" stroke="#555" stroke-width="1"/><path d="M6 2v5M1 7h5" stroke="#333" stroke-width="1"/></svg>
<svg style="left:24px;top:792.3px" width="6" height="6" viewBox="0 0 6 6"><path d="M6 0v6H0z" fill="#333"/></svg>
<svg style="left:6px;top:808.0px" width="24" height="24" viewBox="0 0 24 24"><g fill="none" stroke="#333" stroke-width="1.5"><circle cx="10" cy="10" r="6.5"/><path d="M15 15l6 6" stroke-width="2.5"/></g></svg>
<svg style="left:24px;top:824.0px" width="6" height="6" viewBox="0 0 6 6"><path d="M6 0v6H0z" fill="#333"/></svg>
<div class="a" style="left:6px;top:304px;width:24px;height:1px;background:#9c9c9c"></div>
<div class="a" style="left:6px;top:479px;width:24px;height:1px;background:#9c9c9c"></div>
<div class="a" style="left:6px;top:557px;width:24px;height:1px;background:#9c9c9c"></div>
<div class="a" style="left:6px;top:733px;width:24px;height:1px;background:#9c9c9c"></div>

<!-- /LEFTICONS -->
<!-- DOC TAB STRIP -->
<div class="a" style="left:39px;top:111px;width:1091px;height:25px;background:#939393"></div>
<div class="a" style="left:39px;top:112px;width:200px;height:24px;background:#c4c4c4"></div>

<!-- RULERS -->
<div class="a" style="left:39px;top:136px;width:1075px;height:22px;background:#c4c4c4"></div>
<div class="a" style="left:39px;top:158px;width:22px;height:742px;background:#c4c4c4"></div>

<!-- RULERCONTENT -->
<svg style="left:45px;top:117px" width="10" height="10" viewBox="0 0 10 10"><path d="M1.5 1.5l7 7M8.5 1.5l-7 7" stroke="#333" stroke-width="1.2"/></svg>
<div class="a" style="left:62px;top:112px;width:177px;height:23px;overflow:hidden"><div class="t" style="left:0;top:6px;font-size:11px;font-weight:bold;color:#1a1a1a">Untitled-1 [CMYK] [@58.7%] - [Modified]</div></div>
<div class="a" style="left:239px;top:135px;width:875px;height:1px;background:#858585"></div>
<div class="a" style="left:61px;top:135px;width:1053px;height:23px;overflow:hidden"><svg style="left:0;top:0" width="1053" height="23" font-family="Liberation Sans"><rect x="-19.10" y="10" width="1" height="13" fill="#444"/><rect x="-13.14" y="18.5" width="1" height="4.5" fill="#444"/><rect x="-7.17" y="18.5" width="1" height="4.5" fill="#444"/><rect x="-1.21" y="18.5" width="1" height="4.5" fill="#444"/><rect x="4.76" y="18.5" width="1" height="4.5" fill="#444"/><rect x="10.72" y="14" width="1" height="9" fill="#444"/><rect x="16.68" y="18.5" width="1" height="4.5" fill="#444"/><rect x="22.65" y="18.5" width="1" height="4.5" fill="#444"/><rect x="28.61" y="18.5" width="1" height="4.5" fill="#444"/><rect x="34.58" y="18.5" width="1" height="4.5" fill="#444"/><rect x="40.54" y="10" width="1" height="13" fill="#444"/><rect x="46.50" y="18.5" width="1" height="4.5" fill="#444"/><rect x="52.47" y="18.5" width="1" height="4.5" fill="#444"/><rect x="58.43" y="18.5" width="1" height="4.5" fill="#444"/><rect x="64.40" y="18.5" width="1" height="4.5" fill="#444"/><rect x="70.36" y="14" width="1" height="9" fill="#444"/><rect x="76.32" y="18.5" width="1" height="4.5" fill="#444"/><rect x="82.29" y="18.5" width="1" height="4.5" fill="#444"/><rect x="88.25" y="18.5" width="1" height="4.5" fill="#444"/><rect x="94.22" y="18.5" width="1" height="4.5" fill="#444"/><rect x="100.18" y="10" width="1" height="13" fill="#444"/><rect x="106.14" y="18.5" width="1" height="4.5" fill="#444"/><rect x="112.11" y="18.5" width="1" height="4.5" fill="#444"/><rect x="118.07" y="18.5" width="1" height="4.5" fill="#444"/><rect x="124.04" y="18.5" width="1" height="4.5" fill="#444"/><rect x="130.00" y="14" width="1" height="9" fill="#444"/><rect x="135.96" y="18.5" width="1" height="4.5" fill="#444"/><rect x="141.93" y="18.5" width="1" height="4.5" fill="#444"/><rect x="147.89" y="18.5" width="1" height="4.5" fill="#444"/><rect x="153.86" y="18.5" width="1" height="4.5" fill="#444"/><rect x="159.82" y="10" width="1" height="13" fill="#444"/><rect x="165.78" y="18.5" width="1" height="4.5" fill="#444"/><rect x="171.75" y="18.5" width="1" height="4.5" fill="#444"/><rect x="177.71" y="18.5" width="1" height="4.5" fill="#444"/><rect x="183.68" y="18.5" width="1" height="4.5" fill="#444"/><rect x="189.64" y="14" width="1" height="9" fill="#444"/><rect x="195.60" y="18.5" width="1" height="4.5" fill="#444"/><rect x="201.57" y="18.5" width="1" height="4.5" fill="#444"/><rect x="207.53" y="18.5" width="1" height="4.5" fill="#444"/><rect x="213.50" y="18.5" width="1" height="4.5" fill="#444"/><rect x="219.46" y="10" width="1" height="13" fill="#444"/><rect x="225.42" y="18.5" width="1" height="4.5" fill="#444"/><rect x="231.39" y="18.5" width="1" height="4.5" fill="#444"/><rect x="237.35" y="18.5" width="1" height="4.5" fill="#444"/><rect x="243.32" y="18.5" width="1" height="4.5" fill="#444"/><rect x="249.28" y="14" width="1" height="9" fill="#444"/><rect x="255.24" y="18.5" width="1" height="4.5" fill="#444"/><rect x="261.21" y="18.5" width="1" height="4.5" fill="#444"/><rect x="267.17" y="18.5" width="1" height="4.5" fill="#444"/><rect x="273.14" y="18.5" width="1" height="4.5" fill="#444"/><rect x="279.10" y="10" width="1" height="13" fill="#444"/><rect x="285.06" y="18.5" width="1" height="4.5" fill="#444"/><rect x="291.03" y="18.5" width="1" height="4.5" fill="#444"/><rect x="296.99" y="18.5" width="1" height="4.5" fill="#444"/><rect x="302.96" y="18.5" width="1" height="4.5" fill="#444"/><rect x="308.92" y="14" width="1" height="9" fill="#444"/><rect x="314.88" y="18.5" width="1" height="4.5" fill="#444"/><rect x="320.85" y="18.5" width="1" height="4.5" fill="#444"/><rect x="326.81" y="18.5" width="1" height="4.5" fill="#444"/><rect x="332.78" y="18.5" width="1" height="4.5" fill="#444"/><rect x="338.74" y="10" width="1" height="13" fill="#444"/><rect x="344.70" y="18.5" width="1" height="4.5" fill="#444"/><rect x="350.67" y="18.5" width="1" height="4.5" fill="#444"/><rect x="356.63" y="18.5" width="1" height="4.5" fill="#444"/><rect x="362.60" y="18.5" width="1" height="4.5" fill="#444"/><rect x="368.56" y="14" width="1" height="9" fill="#444"/><rect x="374.52" y="18.5" width="1" height="4.5" fill="#444"/><rect x="380.49" y="18.5" width="1" height="4.5" fill="#444"/><rect x="386.45" y="18.5" width="1" height="4.5" fill="#444"/><rect x="392.42" y="18.5" width="1" height="4.5" fill="#444"/><rect x="398.38" y="10" width="1" height="13" fill="#444"/><rect x="404.34" y="18.5" width="1" height="4.5" fill="#444"/><rect x="410.31" y="18.5" width="1" height="4.5" fill="#444"/><rect x="416.27" y="18.5" width="1" height="4.5" fill="#444"/><rect x="422.24" y="18.5" width="1" height="4.5" fill="#444"/><rect x="428.20" y="14" width="1" height="9" fill="#444"/><rect x="434.16" y="18.5" width="1" height="4.5" fill="#444"/><rect x="440.13" y="18.5" width="1" height="4.5" fill="#444"/><rect x="446.09" y="18.5" width="1" height="4.5" fill="#444"/><rect x="452.06" y="18.5" width="1" height="4.5" fill="#444"/><rect x="458.02" y="10" width="1" height="13" fill="#444"/><rect x="463.98" y="18.5" width="1" height="4.5" fill="#444"/><rect x="469.95" y="18.5" width="1" height="4.5" fill="#444"/><rect x="475.91" y="18.5" width="1" height="4.5" fill="#444"/><rect x="481.88" y="18.5" width="1" height="4.5" fill="#444"/><rect x="487.84" y="14" width="1" height="9" fill="#444"/><rect x="493.80" y="18.5" width="1" height="4.5" fill="#444"/><rect x="499.77" y="18.5" width="1" height="4.5" fill="#444"/><rect x="505.73" y="18.5" width="1" height="4.5" fill="#444"/><rect x="511.70" y="18.5" width="1" height="4.5" fill="#444"/><rect x="517.66" y="10" width="1" height="13" fill="#444"/><rect x="523.62" y="18.5" width="1" height="4.5" fill="#444"/><rect x="529.59" y="18.5" width="1" height="4.5" fill="#444"/><rect x="535.55" y="18.5" width="1" height="4.5" fill="#444"/><rect x="541.52" y="18.5" width="1" height="4.5" fill="#444"/><rect x="547.48" y="14" width="1" height="9" fill="#444"/><rect x="553.44" y="18.5" width="1" height="4.5" fill="#444"/><rect x="559.41" y="18.5" width="1" height="4.5" fill="#444"/><rect x="565.37" y="18.5" width="1" height="4.5" fill="#444"/><rect x="571.34" y="18.5" width="1" height="4.5" fill="#444"/><rect x="577.30" y="10" width="1" height="13" fill="#444"/><rect x="583.26" y="18.5" width="1" height="4.5" fill="#444"/><rect x="589.23" y="18.5" width="1" height="4.5" fill="#444"/><rect x="595.19" y="18.5" width="1" height="4.5" fill="#444"/><rect x="601.16" y="18.5" width="1" height="4.5" fill="#444"/><rect x="607.12" y="14" width="1" height="9" fill="#444"/><rect x="613.08" y="18.5" width="1" height="4.5" fill="#444"/><rect x="619.05" y="18.5" width="1" height="4.5" fill="#444"/><rect x="625.01" y="18.5" width="1" height="4.5" fill="#444"/><rect x="630.98" y="18.5" width="1" height="4.5" fill="#444"/><rect x="636.94" y="10" width="1" height="13" fill="#444"/><rect x="642.90" y="18.5" width="1" height="4.5" fill="#444"/><rect x="648.87" y="18.5" width="1" height="4.5" fill="#444"/><rect x="654.83" y="18.5" width="1" height="4.5" fill="#444"/><rect x="660.80" y="18.5" width="1" height="4.5" fill="#444"/><rect x="666.76" y="14" width="1" height="9" fill="#444"/><rect x="672.72" y="18.5" width="1" height="4.5" fill="#444"/><rect x="678.69" y="18.5" width="1" height="4.5" fill="#444"/><rect x="684.65" y="18.5" width="1" height="4.5" fill="#444"/><rect x="690.62" y="18.5" width="1" height="4.5" fill="#444"/><rect x="696.58" y="10" width="1" height="13" fill="#444"/><rect x="702.54" y="18.5" width="1" height="4.5" fill="#444"/><rect x="708.51" y="18.5" width="1" height="4.5" fill="#444"/><rect x="714.47" y="18.5" width="1" height="4.5" fill="#444"/><rect x="720.44" y="18.5" width="1" height="4.5" fill="#444"/><rect x="726.40" y="14" width="1" height="9" fill="#444"/><rect x="732.36" y="18.5" width="1" height="4.5" fill="#444"/><rect x="738.33" y="18.5" width="1" height="4.5" fill="#444"/><rect x="744.29" y="18.5" width="1" height="4.5" fill="#444"/><rect x="750.26" y="18.5" width="1" height="4.5" fill="#444"/><rect x="756.22" y="10" width="1" height="13" fill="#444"/><rect x="762.18" y="18.5" width="1" height="4.5" fill="#444"/><rect x="768.15" y="18.5" width="1" height="4.5" fill="#444"/><rect x="774.11" y="18.5" width="1" height="4.5" fill="#444"/><rect x="780.08" y="18.5" width="1" height="4.5" fill="#444"/><rect x="786.04" y="14" width="1" height="9" fill="#444"/><rect x="792.00" y="18.5" width="1" height="4.5" fill="#444"/><rect x="797.97" y="18.5" width="1" height="4.5" fill="#444"/><rect x="803.93" y="18.5" width="1" height="4.5" fill="#444"/><rect x="809.90" y="18.5" width="1" height="4.5" fill="#444"/><rect x="815.86" y="10" width="1" height="13" fill="#444"/><rect x="821.82" y="18.5" width="1" height="4.5" fill="#444"/><rect x="827.79" y="18.5" width="1" height="4.5" fill="#444"/><rect x="833.75" y="18.5" width="1" height="4.5" fill="#444"/><rect x="839.72" y="18.5" width="1" height="4.5" fill="#444"/><rect x="845.68" y="14" width="1" height="9" fill="#444"/><rect x="851.64" y="18.5" width="1" height="4.5" fill="#444"/><rect x="857.61" y="18.5" width="1" height="4.5" fill="#444"/><rect x="863.57" y="18.5" width="1" height="4.5" fill="#444"/><rect x="869.54" y="18.5" width="1" height="4.5" fill="#444"/><rect x="875.50" y="10" width="1" height="13" fill="#444"/><rect x="881.46" y="18.5" width="1" height="4.5" fill="#444"/><rect x="887.43" y="18.5" width="1" height="4.5" fill="#444"/><rect x="893.39" y="18.5" width="1" height="4.5" fill="#444"/><rect x="899.36" y="18.5" width="1" height="4.5" fill="#444"/><rect x="905.32" y="14" width="1" height="9" fill="#444"/><rect x="911.28" y="18.5" width="1" height="4.5" fill="#444"/><rect x="917.25" y="18.5" width="1" height="4.5" fill="#444"/><rect x="923.21" y="18.5" width="1" height="4.5" fill="#444"/><rect x="929.18" y="18.5" width="1" height="4.5" fill="#444"/><rect x="935.14" y="10" width="1" height="13" fill="#444"/><rect x="941.10" y="18.5" width="1" height="4.5" fill="#444"/><rect x="947.07" y="18.5" width="1" height="4.5" fill="#444"/><rect x="953.03" y="18.5" width="1" height="4.5" fill="#444"/><rect x="959.00" y="18.5" width="1" height="4.5" fill="#444"/><rect x="964.96" y="14" width="1" height="9" fill="#444"/><rect x="970.92" y="18.5" width="1" height="4.5" fill="#444"/><rect x="976.89" y="18.5" width="1" height="4.5" fill="#444"/><rect x="982.85" y="18.5" width="1" height="4.5" fill="#444"/><rect x="988.82" y="18.5" width="1" height="4.5" fill="#444"/><rect x="994.78" y="10" width="1" height="13" fill="#444"/><rect x="1000.74" y="18.5" width="1" height="4.5" fill="#444"/><rect x="1006.71" y="18.5" width="1" height="4.5" fill="#444"/><rect x="1012.67" y="18.5" width="1" height="4.5" fill="#444"/><rect x="1018.64" y="18.5" width="1" height="4.5" fill="#444"/><rect x="1024.60" y="14" width="1" height="9" fill="#444"/><rect x="1030.56" y="18.5" width="1" height="4.5" fill="#444"/><rect x="1036.53" y="18.5" width="1" height="4.5" fill="#444"/><rect x="1042.49" y="18.5" width="1" height="4.5" fill="#444"/><rect x="1048.46" y="18.5" width="1" height="4.5" fill="#444"/><text x="-16.10" y="14.5" font-size="10.5" font-weight="bold" fill="#111" letter-spacing="0.1">-100</text><text x="43.54" y="14.5" font-size="10.5" font-weight="bold" fill="#111" letter-spacing="0.1">-80</text><text x="103.18" y="14.5" font-size="10.5" font-weight="bold" fill="#111" letter-spacing="0.1">-60</text><text x="162.82" y="14.5" font-size="10.5" font-weight="bold" fill="#111" letter-spacing="0.1">-40</text><text x="222.46" y="14.5" font-size="10.5" font-weight="bold" fill="#111" letter-spacing="0.1">-20</text><text x="282.10" y="14.5" font-size="10.5" font-weight="bold" fill="#111" letter-spacing="0.1">0</text><text x="341.74" y="14.5" font-size="10.5" font-weight="bold" fill="#111" letter-spacing="0.1">20</text><text x="401.38" y="14.5" font-size="10.5" font-weight="bold" fill="#111" letter-spacing="0.1">40</text><text x="461.02" y="14.5" font-size="10.5" font-weight="bold" fill="#111" letter-spacing="0.1">60</text><text x="520.66" y="14.5" font-size="10.5" font-weight="bold" fill="#111" letter-spacing="0.1">80</text><text x="580.30" y="14.5" font-size="10.5" font-weight="bold" fill="#111" letter-spacing="0.1">100</text><text x="639.94" y="14.5" font-size="10.5" font-weight="bold" fill="#111" letter-spacing="0.1">120</text><text x="699.58" y="14.5" font-size="10.5" font-weight="bold" fill="#111" letter-spacing="0.1">140</text><text x="759.22" y="14.5" font-size="10.5" font-weight="bold" fill="#111" letter-spacing="0.1">160</text><text x="818.86" y="14.5" font-size="10.5" font-weight="bold" fill="#111" letter-spacing="0.1">180</text><text x="878.50" y="14.5" font-size="10.5" font-weight="bold" fill="#111" letter-spacing="0.1">200</text><text x="938.14" y="14.5" font-size="10.5" font-weight="bold" fill="#111" letter-spacing="0.1">220</text><text x="997.78" y="14.5" font-size="10.5" font-weight="bold" fill="#111" letter-spacing="0.1">240</text></svg></div>
<div class="a" style="left:39px;top:158px;width:22px;height:742px;overflow:hidden"><svg style="left:0;top:0" width="22" height="742" font-family="Liberation Sans"><rect x="9" y="757.78" width="13" height="1" fill="#444"/><rect x="17.5" y="751.82" width="4.5" height="1" fill="#444"/><rect x="17.5" y="745.85" width="4.5" height="1" fill="#444"/><rect x="17.5" y="739.89" width="4.5" height="1" fill="#444"/><rect x="17.5" y="733.92" width="4.5" height="1" fill="#444"/><rect x="13" y="727.96" width="9" height="1" fill="#444"/><rect x="17.5" y="722.00" width="4.5" height="1" fill="#444"/><rect x="17.5" y="716.03" width="4.5" height="1" fill="#444"/><rect x="17.5" y="710.07" width="4.5" height="1" fill="#444"/><rect x="17.5" y="704.10" width="4.5" height="1" fill="#444"/><rect x="9" y="698.14" width="13" height="1" fill="#444"/><rect x="17.5" y="692.18" width="4.5" height="1" fill="#444"/><rect x="17.5" y="686.21" width="4.5" height="1" fill="#444"/><rect x="17.5" y="680.25" width="4.5" height="1" fill="#444"/><rect x="17.5" y="674.28" width="4.5" height="1" fill="#444"/><rect x="13" y="668.32" width="9" height="1" fill="#444"/><rect x="17.5" y="662.36" width="4.5" height="1" fill="#444"/><rect x="17.5" y="656.39" width="4.5" height="1" fill="#444"/><rect x="17.5" y="650.43" width="4.5" height="1" fill="#444"/><rect x="17.5" y="644.46" width="4.5" height="1" fill="#444"/><rect x="9" y="638.50" width="13" height="1" fill="#444"/><rect x="17.5" y="632.54" width="4.5" height="1" fill="#444"/><rect x="17.5" y="626.57" width="4.5" height="1" fill="#444"/><rect x="17.5" y="620.61" width="4.5" height="1" fill="#444"/><rect x="17.5" y="614.64" width="4.5" height="1" fill="#444"/><rect x="13" y="608.68" width="9" height="1" fill="#444"/><rect x="17.5" y="602.72" width="4.5" height="1" fill="#444"/><rect x="17.5" y="596.75" width="4.5" height="1" fill="#444"/><rect x="17.5" y="590.79" width="4.5" height="1" fill="#444"/><rect x="17.5" y="584.82" width="4.5" height="1" fill="#444"/><rect x="9" y="578.86" width="13" height="1" fill="#444"/><rect x="17.5" y="572.90" width="4.5" height="1" fill="#444"/><rect x="17.5" y="566.93" width="4.5" height="1" fill="#444"/><rect x="17.5" y="560.97" width="4.5" height="1" fill="#444"/><rect x="17.5" y="555.00" width="4.5" height="1" fill="#444"/><rect x="13" y="549.04" width="9" height="1" fill="#444"/><rect x="17.5" y="543.08" width="4.5" height="1" fill="#444"/><rect x="17.5" y="537.11" width="4.5" height="1" fill="#444"/><rect x="17.5" y="531.15" width="4.5" height="1" fill="#444"/><rect x="17.5" y="525.18" width="4.5" height="1" fill="#444"/><rect x="9" y="519.22" width="13" height="1" fill="#444"/><rect x="17.5" y="513.26" width="4.5" height="1" fill="#444"/><rect x="17.5" y="507.29" width="4.5" height="1" fill="#444"/><rect x="17.5" y="501.33" width="4.5" height="1" fill="#444"/><rect x="17.5" y="495.36" width="4.5" height="1" fill="#444"/><rect x="13" y="489.40" width="9" height="1" fill="#444"/><rect x="17.5" y="483.44" width="4.5" height="1" fill="#444"/><rect x="17.5" y="477.47" width="4.5" height="1" fill="#444"/><rect x="17.5" y="471.51" width="4.5" height="1" fill="#444"/><rect x="17.5" y="465.54" width="4.5" height="1" fill="#444"/><rect x="9" y="459.58" width="13" height="1" fill="#444"/><rect x="17.5" y="453.62" width="4.5" height="1" fill="#444"/><rect x="17.5" y="447.65" width="4.5" height="1" fill="#444"/><rect x="17.5" y="441.69" width="4.5" height="1" fill="#444"/><rect x="17.5" y="435.72" width="4.5" height="1" fill="#444"/><rect x="13" y="429.76" width="9" height="1" fill="#444"/><rect x="17.5" y="423.80" width="4.5" height="1" fill="#444"/><rect x="17.5" y="417.83" width="4.5" height="1" fill="#444"/><rect x="17.5" y="411.87" width="4.5" height="1" fill="#444"/><rect x="17.5" y="405.90" width="4.5" height="1" fill="#444"/><rect x="9" y="399.94" width="13" height="1" fill="#444"/><rect x="17.5" y="393.98" width="4.5" height="1" fill="#444"/><rect x="17.5" y="388.01" width="4.5" height="1" fill="#444"/><rect x="17.5" y="382.05" width="4.5" height="1" fill="#444"/><rect x="17.5" y="376.08" width="4.5" height="1" fill="#444"/><rect x="13" y="370.12" width="9" height="1" fill="#444"/><rect x="17.5" y="364.16" width="4.5" height="1" fill="#444"/><rect x="17.5" y="358.19" width="4.5" height="1" fill="#444"/><rect x="17.5" y="352.23" width="4.5" height="1" fill="#444"/><rect x="17.5" y="346.26" width="4.5" height="1" fill="#444"/><rect x="9" y="340.30" width="13" height="1" fill="#444"/><rect x="17.5" y="334.34" width="4.5" height="1" fill="#444"/><rect x="17.5" y="328.37" width="4.5" height="1" fill="#444"/><rect x="17.5" y="322.41" width="4.5" height="1" fill="#444"/><rect x="17.5" y="316.44" width="4.5" height="1" fill="#444"/><rect x="13" y="310.48" width="9" height="1" fill="#444"/><rect x="17.5" y="304.52" width="4.5" height="1" fill="#444"/><rect x="17.5" y="298.55" width="4.5" height="1" fill="#444"/><rect x="17.5" y="292.59" width="4.5" height="1" fill="#444"/><rect x="17.5" y="286.62" width="4.5" height="1" fill="#444"/><rect x="9" y="280.66" width="13" height="1" fill="#444"/><rect x="17.5" y="274.70" width="4.5" height="1" fill="#444"/><rect x="17.5" y="268.73" width="4.5" height="1" fill="#444"/><rect x="17.5" y="262.77" width="4.5" height="1" fill="#444"/><rect x="17.5" y="256.80" width="4.5" height="1" fill="#444"/><rect x="13" y="250.84" width="9" height="1" fill="#444"/><rect x="17.5" y="244.88" width="4.5" height="1" fill="#444"/><rect x="17.5" y="238.91" width="4.5" height="1" fill="#444"/><rect x="17.5" y="232.95" width="4.5" height="1" fill="#444"/><rect x="17.5" y="226.98" width="4.5" height="1" fill="#444"/><rect x="9" y="221.02" width="13" height="1" fill="#444"/><rect x="17.5" y="215.06" width="4.5" height="1" fill="#444"/><rect x="17.5" y="209.09" width="4.5" height="1" fill="#444"/><rect x="17.5" y="203.13" width="4.5" height="1" fill="#444"/><rect x="17.5" y="197.16" width="4.5" height="1" fill="#444"/><rect x="13" y="191.20" width="9" height="1" fill="#444"/><rect x="17.5" y="185.24" width="4.5" height="1" fill="#444"/><rect x="17.5" y="179.27" width="4.5" height="1" fill="#444"/><rect x="17.5" y="173.31" width="4.5" height="1" fill="#444"/><rect x="17.5" y="167.34" width="4.5" height="1" fill="#444"/><rect x="9" y="161.38" width="13" height="1" fill="#444"/><rect x="17.5" y="155.42" width="4.5" height="1" fill="#444"/><rect x="17.5" y="149.45" width="4.5" height="1" fill="#444"/><rect x="17.5" y="143.49" width="4.5" height="1" fill="#444"/><rect x="17.5" y="137.52" width="4.5" height="1" fill="#444"/><rect x="13" y="131.56" width="9" height="1" fill="#444"/><rect x="17.5" y="125.60" width="4.5" height="1" fill="#444"/><rect x="17.5" y="119.63" width="4.5" height="1" fill="#444"/><rect x="17.5" y="113.67" width="4.5" height="1" fill="#444"/><rect x="17.5" y="107.70" width="4.5" height="1" fill="#444"/><rect x="9" y="101.74" width="13" height="1" fill="#444"/><rect x="17.5" y="95.78" width="4.5" height="1" fill="#444"/><rect x="17.5" y="89.81" width="4.5" height="1" fill="#444"/><rect x="17.5" y="83.85" width="4.5" height="1" fill="#444"/><rect x="17.5" y="77.88" width="4.5" height="1" fill="#444"/><rect x="13" y="71.92" width="9" height="1" fill="#444"/><rect x="17.5" y="65.96" width="4.5" height="1" fill="#444"/><rect x="17.5" y="59.99" width="4.5" height="1" fill="#444"/><rect x="17.5" y="54.03" width="4.5" height="1" fill="#444"/><rect x="17.5" y="48.06" width="4.5" height="1" fill="#444"/><rect x="9" y="42.10" width="13" height="1" fill="#444"/><rect x="17.5" y="36.14" width="4.5" height="1" fill="#444"/><rect x="17.5" y="30.17" width="4.5" height="1" fill="#444"/><rect x="17.5" y="24.21" width="4.5" height="1" fill="#444"/><rect x="17.5" y="18.24" width="4.5" height="1" fill="#444"/><rect x="13" y="12.28" width="9" height="1" fill="#444"/><rect x="17.5" y="6.32" width="4.5" height="1" fill="#444"/><rect x="17.5" y="0.35" width="4.5" height="1" fill="#444"/><rect x="17.5" y="-5.61" width="4.5" height="1" fill="#444"/><rect x="17.5" y="-11.58" width="4.5" height="1" fill="#444"/><rect x="9" y="-17.54" width="13" height="1" fill="#444"/><text transform="translate(13.8 755.78) rotate(-90)" font-size="10.5" font-weight="bold" fill="#111" letter-spacing="0.1">-40</text><text transform="translate(13.8 696.14) rotate(-90)" font-size="10.5" font-weight="bold" fill="#111" letter-spacing="0.1">-20</text><text transform="translate(13.8 636.50) rotate(-90)" font-size="10.5" font-weight="bold" fill="#111" letter-spacing="0.1">0</text><text transform="translate(13.8 576.86) rotate(-90)" font-size="10.5" font-weight="bold" fill="#111" letter-spacing="0.1">20</text><text transform="translate(13.8 517.22) rotate(-90)" font-size="10.5" font-weight="bold" fill="#111" letter-spacing="0.1">40</text><text transform="translate(13.8 457.58) rotate(-90)" font-size="10.5" font-weight="bold" fill="#111" letter-spacing="0.1">60</text><text transform="translate(13.8 397.94) rotate(-90)" font-size="10.5" font-weight="bold" fill="#111" letter-spacing="0.1">80</text><text transform="translate(13.8 338.30) rotate(-90)" font-size="10.5" font-weight="bold" fill="#111" letter-spacing="0.1">100</text><text transform="translate(13.8 278.66) rotate(-90)" font-size="10.5" font-weight="bold" fill="#111" letter-spacing="0.1">120</text><text transform="translate(13.8 219.02) rotate(-90)" font-size="10.5" font-weight="bold" fill="#111" letter-spacing="0.1">140</text><text transform="translate(13.8 159.38) rotate(-90)" font-size="10.5" font-weight="bold" fill="#111" letter-spacing="0.1">160</text><text transform="translate(13.8 99.74) rotate(-90)" font-size="10.5" font-weight="bold" fill="#111" letter-spacing="0.1">180</text><text transform="translate(13.8 40.10) rotate(-90)" font-size="10.5" font-weight="bold" fill="#111" letter-spacing="0.1">200</text><text transform="translate(13.8 -19.54) rotate(-90)" font-size="10.5" font-weight="bold" fill="#111" letter-spacing="0.1">220</text></svg></div>
<svg style="left:43px;top:140px" width="18" height="18" viewBox="0 0 18 18"><g stroke="#111" stroke-width="1.2" stroke-dasharray="2 2"><path d="M10 0v18M0 9h18"/></g></svg>

<!-- /RULERCONTENT -->
<!-- CANVAS -->
<div class="a" style="left:61px;top:158px;width:1053px;height:726px;background:#757776"></div>

<!-- V SCROLLBAR -->
<div class="a" style="left:1114px;top:136px;width:16px;height:764px;background:#cccccc"></div>
<div class="a" style="left:1130px;top:111px;width:2px;height:789px;background:#9c9c9c"></div>

<!-- STATUS BAR -->
<div class="a" style="left:61px;top:884px;width:1053px;height:16px;background:#d3d3d3"></div>

<!-- CANVASCONTENT -->
<div class="t" style="left:606px;top:179px;font-size:14px;color:#ececec">Artboard 1</div>
<div class="a" style="left:331px;top:192px;width:615px;height:615px;border:1px solid #a85454"></div>
<div class="a" style="left:340px;top:200px;width:598px;height:598px;background:#fff;border:2px solid #2c2c2c;border-radius:1px"></div>
<div class="a" style="left:370px;top:231px;width:537px;height:537px;border:1px solid #b4b0ff"></div>
<div class="a" style="left:569px;top:438px;width:139px;height:123px;background:#5eb6e3;border:1px solid #1e2a30"></div>
<div class="a" style="left:633.2px;top:433.0px;width:11px;height:11px;border-radius:50%;background:rgba(110,180,230,0.6);border:1px solid #3a4a58"></div>
<div class="a" style="left:564.0px;top:493.5px;width:11px;height:11px;border-radius:50%;background:rgba(110,180,230,0.6);border:1px solid #3a4a58"></div>
<div class="a" style="left:702.1px;top:493.5px;width:11px;height:11px;border-radius:50%;background:rgba(110,180,230,0.6);border:1px solid #3a4a58"></div>
<div class="a" style="left:633.2px;top:554.5px;width:11px;height:11px;border-radius:50%;background:rgba(110,180,230,0.6);border:1px solid #3a4a58"></div>
<svg style="left:1115px;top:144px" width="14" height="10" viewBox="0 0 14 10"><path d="M2 8l5-5 5 5" fill="none" stroke="#111" stroke-width="1.6"/></svg>
<svg style="left:1115px;top:870px" width="14" height="10" viewBox="0 0 14 10"><path d="M2 2l5 5 5-5" fill="none" stroke="#111" stroke-width="1.6"/></svg>
<div class="a" style="left:1116px;top:524px;width:12px;height:70px;background:#333;border-radius:5px"></div>
<div class="a" style="left:61px;top:884px;width:70px;height:16px;background:#d6d6d6;"></div>
<div class="t" style="left:69px;top:888px;font-size:11px;font-weight:bold;color:#1a1a1a;">58.7%</div>
<svg style="left:114px;top:888px" width="12" height="8" viewBox="0 0 12 8"><path d="M1.5 1.5l4.5 4.5 4.5-4.5" fill="none" stroke="#333" stroke-width="1.4"/></svg>
<div class="a" style="left:132px;top:884px;width:60px;height:16px;background:#d2d2d2;"></div>
<div class="t" style="left:141px;top:888px;font-size:11px;font-weight:bold;color:#1a1a1a;">0.0&#176;</div>
<svg style="left:176px;top:888px" width="12" height="8" viewBox="0 0 12 8"><path d="M1.5 1.5l4.5 4.5 4.5-4.5" fill="none" stroke="#333" stroke-width="1.4"/></svg>
<div class="a" style="left:193px;top:884px;width:33px;height:16px;background:#c3c3c3;"></div>
<svg style="left:197px;top:886px" width="28" height="12" viewBox="0 0 28 12"><rect x="1" y="1" width="1.6" height="10" fill="#222"/><path d="M3 6l6-5v10z" fill="#222"/><path d="M17 6l6-5v10z" fill="#222"/></svg>
<div class="a" style="left:226px;top:884px;width:57px;height:16px;background:#d2d2d2;"></div>
<div class="t" style="left:237px;top:888px;font-size:11px;font-weight:bold;color:#1a1a1a;">1</div>
<svg style="left:266px;top:888px" width="12" height="8" viewBox="0 0 12 8"><path d="M1.5 1.5l4.5 4.5 4.5-4.5" fill="none" stroke="#333" stroke-width="1.4"/></svg>
<div class="a" style="left:283px;top:884px;width:33px;height:16px;background:#c3c3c3;"></div>
<svg style="left:284px;top:886px" width="30" height="12" viewBox="0 0 30 12"><path d="M3 1l6 5-6 5z" fill="#222"/><path d="M16 1l6 5-6 5z" fill="#222"/><rect x="23" y="1" width="1.6" height="10" fill="#222"/></svg>
<div class="t" style="left:322px;top:888px;font-size:11px;font-weight:bold;color:#1a1a1a;font-size:11.3px">Artboard (200.0, 200.0)</div>
<svg style="left:480px;top:888px" width="12" height="8" viewBox="0 0 12 8"><path d="M1.5 1.5l4.5 4.5 4.5-4.5" fill="none" stroke="#333" stroke-width="1.4"/></svg>
<div class="a" style="left:500px;top:885px;width:14px;height:14px;background:#e84848;border-radius:2px"></div>
<svg style="left:500px;top:885px" width="14" height="14" viewBox="0 0 14 14"><path d="M3 3h8M7 5v6M4.5 8.5L7 11l2.5-2.5" fill="none" stroke="#fff" stroke-width="1.2"/></svg>
<svg style="left:520px;top:886px" width="10" height="12" viewBox="0 0 10 12"><path d="M8 1L3 6l5 5" fill="none" stroke="#111" stroke-width="1.6"/></svg>
<div class="a" style="left:737px;top:886px;width:56px;height:12px;background:#333;border-radius:6px"></div>
<svg style="left:1098px;top:886px" width="10" height="12" viewBox="0 0 10 12"><path d="M2 1l5 5-5 5" fill="none" stroke="#111" stroke-width="1.6"/></svg>
<svg style="left:1113px;top:884px" width="16" height="16" viewBox="0 0 16 16"><rect x="2.5" y="1.5" width="11" height="12" rx="1" fill="none" stroke="#444" stroke-width="1"/><path d="M0 8h4M12 8h4M8 0v3M8 12v4" stroke="#444" stroke-width="1"/><path d="M8 3v9M4 8h8" stroke="#b8b8b8" stroke-width="1"/></svg>

<!-- /CANVASCONTENT -->
<!-- NAV -->
<div class="a" style="left:72px;top:637px;width:202px;height:226px;background:#c3c3c3;box-shadow:0 3px 8px rgba(0,0,0,0.35);border:1px solid #b0b0b0"></div>
<div class="a" style="left:73px;top:638px;width:200px;height:23px;background:#a9a9a9;"></div>
<div class="a" style="left:115px;top:640px;width:75px;height:21px;background:#c3c3c3;"></div>
<div class="a" style="left:73px;top:661px;width:200px;height:1px;background:#959595;"></div>
<div class="a" style="left:190px;top:660px;width:83px;height:1px;background:#8e8e8e;"></div>
<div class="a" style="left:77px;top:645px;width:12px;height:12px;background:#c2c2c2;border-radius:50%"></div>
<svg style="left:79px;top:647px" width="8" height="8" viewBox="0 0 8 8"><path d="M1 1l6 6M7 1l-6 6" stroke="#333" stroke-width="1.1"/></svg>
<svg style="left:92px;top:645px" width="9" height="12" viewBox="0 0 9 12"><path d="M1 1l3.5 5L1 11M4.5 1L8 6l-3.5 5" fill="none" stroke="#666" stroke-width="1"/></svg>
<div class="a" style="left:105px;top:645px;width:2px;height:13px;background:#777;"></div>
<div class="a" style="left:109px;top:645px;width:2px;height:13px;background:#777;"></div>
<div class="t" style="left:130px;top:647px;font-size:11px;font-weight:bold;color:#1a1a1a;">Navigator</div>
<div class="t" style="left:129px;top:678px;font-size:11px;font-weight:bold;color:#1a1a1a;">View</div>
<div class="a" style="left:160px;top:672px;width:108px;height:20px;background:#d2d2d2;border-radius:3px"></div>
<div class="t" style="left:166px;top:678px;font-size:11px;font-weight:bold;color:#1a1a1a;">Custom</div>
<svg style="left:250px;top:678px" width="14" height="9" viewBox="0 0 14 9"><path d="M1.5 1.5l5.5 5.5 5.5-5.5" fill="none" stroke="#333" stroke-width="1.5"/></svg>
<div class="a" style="left:78px;top:700px;width:190px;height:99px;background:#4a4a4a;"></div>
<div class="a" style="left:92px;top:702px;width:148px;height:97px;border:1.3px solid #c85050;border-bottom:none"></div>
<div class="a" style="left:132px;top:708px;width:82px;height:83px;background:#fff;"></div>
<div class="a" style="left:163px;top:741px;width:20px;height:17px;background:#4db6e6;"></div>
<div class="a" style="left:240px;top:752px;width:12px;height:1px;background:#111;"></div>
<div class="a" style="left:78px;top:752px;width:14px;height:1px;background:#111;"></div>
<div class="a" style="left:251px;top:748px;width:9px;height:9px;border-radius:50%;background:#3a5a80;border:1px solid #1a2a3a"></div>
<div class="a" style="left:78px;top:748px;width:4px;height:9px;overflow:hidden"><div class="a" style="left:-5px;top:0;width:9px;height:9px;border-radius:50%;background:#3a5a80;border:1px solid #1a2a3a"></div></div>
<div class="a" style="left:78px;top:804px;width:190px;height:1px;background:#a8a8a8;"></div>
<svg style="left:80px;top:812px" width="17" height="17" viewBox="0 0 17 17"><g fill="none" stroke="#222" stroke-width="1.3"><circle cx="7" cy="7" r="5.5"/><path d="M11 11l5 5M4.5 7h5"/></g></svg>
<div class="a" style="left:100px;top:817px;width:144px;height:6px;background:#c8c8c8;border-radius:3px;border:1px solid #adadad"></div>
<div class="a" style="left:118px;top:813px;width:15px;height:15px;border-radius:50%;background:#fff;border:1px solid #999"></div>
<svg style="left:248px;top:812px" width="17" height="17" viewBox="0 0 17 17"><g fill="none" stroke="#222" stroke-width="1.3"><circle cx="7" cy="7" r="5.5"/><path d="M11 11l5 5M4.5 7h5M7 4.5v5"/></g></svg>
<div class="a" style="left:83px;top:835px;width:22px;height:22px;background:#7ab6f8;border-radius:2px"></div>
<svg style="left:84px;top:836px" width="20" height="20" viewBox="0 0 20 20"><g fill="none" stroke="#333" stroke-width="1.4"><circle cx="8" cy="8" r="6" fill="#9ab"/><path d="M12.5 12.5l5 5" stroke-width="2"/></g></svg>
<div class="a" style="left:110px;top:835px;width:22px;height:22px;background:#7ab6f8;border-radius:2px"></div>
<svg style="left:111px;top:836px" width="20" height="20" viewBox="0 0 20 20"><rect x="5" y="5" width="10" height="10" fill="#8a8a8a" stroke="#555"/><path d="M3 5a8 8 0 0 1 14 1M17 14a8 8 0 0 1-10 4" fill="none" stroke="#333" stroke-width="1.2"/><path d="M2 3v4h4" fill="none" stroke="#333" stroke-width="1.2"/></svg>
<div class="a" style="left:142px;top:837px;width:66px;height:19px;background:#e3e3e3;"></div>
<div class="t" style="left:146px;top:842px;font-size:11px;font-weight:bold;color:#1a1a1a;">0&#176;</div>
<div class="a" style="left:208px;top:837px;width:13px;height:19px;background:#cdcdcd;"></div>
<svg style="left:209px;top:837px" width="11" height="18" viewBox="0 0 11 18"><path d="M2 7l3.5-4L9 7M2 11l3.5 4L9 11" fill="none" stroke="#333" stroke-width="1.3"/></svg>
<svg style="left:228px;top:837px" width="18" height="18" viewBox="0 0 18 18"><g fill="none" stroke="#333" stroke-width="1.3"><circle cx="9" cy="9" r="2.5"/><path d="M3 7a6.5 6.5 0 0 1 11-3M15 11a6.5 6.5 0 0 1-11 3"/><path d="M14 1v3h-3M4 17v-3h3"/></g></svg>
<div class="a" style="left:258px;top:837px;width:16px;height:19px;background:#d4d4d4;"></div>
<div class="t" style="left:264px;top:842px;font-size:11px;font-weight:bold;color:#1a1a1a;">5</div>

<!-- /NAV -->
<!-- RIGHT PANEL -->
<div class="a" style="left:1132px;top:111px;width:283px;height:789px;background:#c2c2c2"></div>
<div class="a" style="left:1415px;top:111px;width:1px;height:789px;background:#b4b4b4"></div><div class="a" style="left:1416px;top:111px;width:2px;height:789px;background:#929292"></div>
<div class="a" style="left:1418px;top:111px;width:22px;height:789px;background:#c4c4c4"></div>

<!-- RIGHTCONTENT -->
<div class="a" style="left:1132px;top:111px;width:1px;height:789px;background:#c4c4c4;"></div>
<div class="a" style="left:1133px;top:112px;width:282px;height:23px;background:#a9a9a9;"></div>
<div class="a" style="left:1133px;top:135px;width:282px;height:1px;background:#8e8e8e;"></div>
<div class="a" style="left:1137px;top:119px;width:12px;height:12px;background:#c4c4c4;border-radius:50%"></div>
<svg style="left:1139px;top:121px" width="8" height="8" viewBox="0 0 8 8"><path d="M1 1l6 6M7 1l-6 6" stroke="#333" stroke-width="1.1"/></svg>
<svg style="left:1151px;top:119px" width="9" height="12" viewBox="0 0 9 12"><path d="M1 1l3.5 5L1 11M4.5 1L8 6l-3.5 5" fill="none" stroke="#666" stroke-width="1"/></svg>
<div class="a" style="left:1165px;top:118px;width:2px;height:14px;background:#777;"></div>
<div class="a" style="left:1169px;top:118px;width:2px;height:14px;background:#777;"></div>
<div class="a" style="left:1175px;top:114px;width:59px;height:22px;background:#c2c2c2;"></div>
<div class="t" style="left:1190px;top:120px;font-size:11px;font-weight:bold;color:#1a1a1a;font-size:10.6px">Layers</div>
<div class="t" style="left:1249px;top:120px;font-size:11px;font-weight:bold;color:#1a1a1a;font-size:10.7px;color:#5e5e5e">Canvas</div>
<svg style="left:1393px;top:119px" width="14" height="13" viewBox="0 0 14 13"><g fill="#333"><rect x="0" y="0.5" width="14" height="1.3"/><rect x="0" y="4" width="14" height="1.3"/><rect x="0" y="7.5" width="14" height="1.3"/><rect x="0" y="11" width="14" height="1.3"/></g></svg>
<div class="a" style="left:1142px;top:144px;width:251px;height:27px;background:#bddcfc;border-radius:6px"></div>
<svg style="left:1142px;top:151px" width="16" height="12" viewBox="0 0 16 12"><g fill="none" stroke="#555" stroke-width="1"><path d="M1 6c2-3.5 4.5-5 7-5s5 1.5 7 5c-2 3.5-4.5 5-7 5s-5-1.5-7-5z"/><circle cx="8" cy="6" r="2"/></g></svg>
<svg style="left:1164px;top:149px" width="14" height="16" viewBox="0 0 14 16"><g fill="none" stroke="#777" stroke-width="1.1"><path d="M1.5 7V4.5a3 3 0 0 1 6 0"/><rect x="5.5" y="8.5" width="7" height="6"/></g></svg>
<div class="a" style="left:1190px;top:148px;width:13px;height:19px;background:#000;"></div>
<svg style="left:1212px;top:152px" width="9" height="10" viewBox="0 0 9 10"><path d="M0 0l9 5-9 5z" fill="#222"/></svg>
<div class="a" style="left:1228px;top:148px;width:20px;height:19px;background:#4fb8e6;"></div>
<div class="t" style="left:1252px;top:152px;font-size:11px;font-weight:bold;color:#1a1a1a;font-size:10.8px;letter-spacing:-0.1px">Layer 1</div>
<div class="a" style="left:1372px;top:150px;width:14px;height:14px;border-radius:50%;border:1.2px solid #444"></div>
<div class="a" style="left:1395.5px;top:145px;width:11px;height:113px;background:#b3b3b3;border-radius:3px;border:1px solid #c8c8c8"></div>
<div class="a" style="left:1141px;top:265px;width:266px;height:1px;background:#a9a9a9;"></div>
<div class="a" style="left:1141px;top:274px;width:266px;height:20px;background:#e2e2e2;border-radius:5px"></div>
<svg style="left:1147px;top:277px" width="15" height="15" viewBox="0 0 15 15"><g fill="none" stroke="#222" stroke-width="1.2"><circle cx="9" cy="6" r="4.5"/><path d="M6 9l-4.5 4.5" stroke-width="1.6"/></g></svg>
<div class="t" style="left:1165px;top:279px;font-size:11px;color:#1a1a1a;font-size:11.5px;color:#a4a4a4">Search</div>
<svg style="left:1385px;top:276px" width="16" height="16" viewBox="0 0 16 16"><g fill="none" stroke="#222" stroke-width="1"><circle cx="8" cy="8" r="6.5"/><path d="M5.5 5.5l5 5M10.5 5.5l-5 5"/></g></svg>
<svg style="left:1135px;top:312px" width="20" height="20" viewBox="0 0 20 20"><g fill="none" stroke="#777" stroke-width="1.2"><path d="M2 7h16M2 13h16"/><circle cx="7" cy="7" r="2.2" fill="#c2c2c2"/><circle cx="13" cy="13" r="2.2" fill="#c2c2c2"/></g></svg>
<svg style="left:1163px;top:312px" width="20" height="20" viewBox="0 0 20 20"><g fill="none" stroke="#777" stroke-width="1.3"><rect x="6.5" y="2.5" width="11" height="11"/><rect x="2.5" y="6.5" width="11" height="11" fill="#c2c2c2"/></g></svg>
<svg style="left:1191px;top:312px" width="20" height="20" viewBox="0 0 20 20"><g fill="none" stroke="#777" stroke-width="1.2"><circle cx="10" cy="10" r="8"/><circle cx="12" cy="9" r="4.5"/><circle cx="8.5" cy="11.5" r="4" fill="#777"/></g></svg>
<svg style="left:1219px;top:312px" width="20" height="20" viewBox="0 0 20 20"><g fill="none" stroke="#777" stroke-width="1.2"><rect x="2.5" y="2.5" width="15" height="15"/><rect x="6" y="8" width="6" height="6"/><rect x="8" y="6" width="6" height="6"/></g></svg>
<svg style="left:1247px;top:312px" width="20" height="20" viewBox="0 0 20 20"><g fill="none" stroke="#777" stroke-width="1.2"><rect x="2.5" y="6.5" width="11" height="11"/><rect x="6.5" y="2.5" width="11" height="11"/></g></svg>
<svg style="left:1275px;top:312px" width="20" height="20" viewBox="0 0 20 20"><g fill="none" stroke="#8a8a8a" stroke-width="1"><rect x="2.5" y="2.5" width="15" height="15"/><path d="M2.5 7.5c3 1 4-1 7 0s3 2 8 0M2.5 12.5c3 1 4-1 7 0s3 2 8 0M7.5 2.5c1 3-1 4 0 7s2 3 0 8M12.5 2.5c1 3-1 4 0 7s2 3 0 8"/></g></svg>
<svg style="left:1303px;top:312px" width="20" height="20" viewBox="0 0 20 20"><g fill="none" stroke="#8a8a8a" stroke-width="1.2"><path d="M2 6.5h4l1.5-2h5l1.5 2h4v10H2z"/><circle cx="10" cy="11" r="3.5"/></g></svg>
<svg style="left:1331px;top:312px" width="20" height="20" viewBox="0 0 20 20"><g fill="none" stroke="#333" stroke-width="1.3"><rect x="6.5" y="2.5" width="11" height="11" rx="2"/><rect x="2.5" y="6.5" width="11" height="11" rx="2" fill="#c2c2c2"/><path d="M8 9.5v5M5.5 12h5"/></g></svg>
<svg style="left:1359px;top:312px" width="20" height="20" viewBox="0 0 20 20"><g fill="none" stroke="#777" stroke-width="1.2"><rect x="2.5" y="2.5" width="13" height="13"/><path d="M18 5v13H5M9 5.5v7M5.5 9h7"/></g></svg>
<svg style="left:1387px;top:312px" width="20" height="20" viewBox="0 0 20 20"><g fill="none" stroke="#777" stroke-width="1.3"><path d="M3 5h14M7.5 5V3h5v2M4.5 5l1 13h9l1-13M8 8v7M10 8v7M12 8v7"/></g></svg>
<div class="a" style="left:1133px;top:342px;width:282px;height:24px;background:#a9a9a9;"></div>
<div class="a" style="left:1133px;top:366px;width:282px;height:1px;background:#8e8e8e;"></div>
<div class="a" style="left:1136px;top:344px;width:52px;height:22px;background:#c2c2c2;"></div>
<svg style="left:1141px;top:348px" width="8" height="13" viewBox="0 0 8 13"><path d="M1 5l3-3.5L7 5M1 8l3 3.5L7 8" fill="none" stroke="#333" stroke-width="1"/></svg>
<div class="t" style="left:1151px;top:350.5px;font-size:11px;font-weight:bold;color:#1a1a1a;font-size:10.9px">Color</div>
<div class="t" style="left:1203px;top:351px;font-size:11px;font-weight:bold;color:#1a1a1a;font-size:11.6px;color:#5e5e5e;font-weight:normal">DIC &#12459;&#12521;&#12540;&#12460;&#12452;&#12489;</div>
<svg style="left:1393px;top:349px" width="14" height="13" viewBox="0 0 14 13"><g fill="#333"><rect x="0" y="0.5" width="14" height="1.3"/><rect x="0" y="4" width="14" height="1.3"/><rect x="0" y="7.5" width="14" height="1.3"/><rect x="0" y="11" width="14" height="1.3"/></g></svg>
<svg style="left:1144px;top:383px" width="16" height="14" viewBox="0 0 16 14"><g fill="none" stroke="#333" stroke-width="1.2"><path d="M3 12V6a3 3 0 0 1 3-3h7"/></g><path d="M10 0.5l4 2.5-4 2.5z" fill="#333"/><path d="M0.5 9.5L3 13.5l2.5-4z" fill="#333"/></svg>
<div class="a" style="left:1160px;top:382px;width:29px;height:29px;background:#fff;border:0.5px solid #ddd"></div>
<div class="a" style="left:1168px;top:390px;width:13px;height:13px;background:#bdbdbd;"></div>
<svg style="left:1178px;top:384px" width="9" height="8" viewBox="0 0 9 8"><path d="M1 7l7-6" stroke="#e33" stroke-width="1.3"/></svg>
<div class="a" style="left:1143px;top:398px;width:30px;height:30px;background:#4fb8e6;border:1.5px solid #f4f4f4"></div>
<div class="t" style="left:1198px;top:388.5px;font-size:11px;font-weight:bold;color:#1a1a1a;font-size:11.6px">C</div>
<div class="a" style="left:1214px;top:390.0px;width:145px;height:7px;background:#888;background:linear-gradient(90deg,#fcfbe6,#d8f0f4 25%,#58bce6 60%,#3c9ee6)"></div>
<div class="a" style="left:1301.2px;top:387.0px;width:13px;height:13px;border-radius:50%;background:#4fb8e6;border:1.5px solid #111"></div>
<div class="a" style="left:1363px;top:382.5px;width:42px;height:21px;background:#e2e2e2;"></div>
<div class="t" style="left:1368px;top:388.5px;font-size:11px;font-weight:bold;color:#1a1a1a;font-size:11.6px">66</div>
<div class="t" style="left:1196px;top:414.5px;font-size:11px;font-weight:bold;color:#1a1a1a;font-size:11.6px">M</div>
<div class="a" style="left:1214px;top:416.0px;width:145px;height:7px;background:#888;background:linear-gradient(90deg,#48b8e8,#4a88c8 40%,#6a3a98 80%,#6a2a88)"></div>
<div class="a" style="left:1213.1px;top:413.0px;width:13px;height:13px;border-radius:50%;background:#4fb8e6;border:1.5px solid #111"></div>
<div class="a" style="left:1363px;top:408.5px;width:42px;height:21px;background:#e2e2e2;"></div>
<div class="t" style="left:1368px;top:414.5px;font-size:11px;font-weight:bold;color:#1a1a1a;font-size:11.6px">0</div>
<div class="t" style="left:1198px;top:440.5px;font-size:11px;font-weight:bold;color:#1a1a1a;font-size:11.6px">Y</div>
<div class="a" style="left:1214px;top:442.0px;width:145px;height:7px;background:#888;background:linear-gradient(90deg,#4cb8e8,#5ab8b0 40%,#5aae48 100%)"></div>
<div class="a" style="left:1217.9px;top:439.0px;width:13px;height:13px;border-radius:50%;background:#4fb8e6;border:1.5px solid #111"></div>
<div class="a" style="left:1363px;top:434.5px;width:42px;height:21px;background:#e2e2e2;"></div>
<div class="t" style="left:1368px;top:440.5px;font-size:11px;font-weight:bold;color:#1a1a1a;font-size:11.6px">4</div>
<div class="t" style="left:1198px;top:466.5px;font-size:11px;font-weight:bold;color:#1a1a1a;font-size:11.6px">K</div>
<div class="a" style="left:1214px;top:468.0px;width:145px;height:7px;background:#888;background:linear-gradient(90deg,#48b4e6,#2a7898 40%,#1a2830 80%,#161c20)"></div>
<div class="a" style="left:1213.1px;top:465.0px;width:13px;height:13px;border-radius:50%;background:#4fb8e6;border:1.5px solid #111"></div>
<div class="a" style="left:1363px;top:460.5px;width:42px;height:21px;background:#e2e2e2;"></div>
<div class="t" style="left:1368px;top:466.5px;font-size:11px;font-weight:bold;color:#1a1a1a;font-size:11.6px">0</div>
<div class="a" style="left:1144px;top:493px;width:18px;height:18px;border-radius:50%;background:#a8a8a8;border:1px solid #777"></div>
<svg style="left:1146px;top:495px" width="14" height="14" viewBox="0 0 14 14"><path d="M2.5 11.5L8.5 5.5" stroke="#333" stroke-width="2.6" stroke-linecap="round"/><path d="M2.5 11.5L8.5 5.5" stroke="#ddd" stroke-width="1.2" stroke-linecap="round"/><path d="M8 6L12 2" stroke="#222" stroke-width="3.2" stroke-linecap="round"/><path d="M7 4.5l2.5 2.5" stroke="#222" stroke-width="1.5"/></svg>
<div class="a" style="left:1166px;top:493px;width:18px;height:18px;border-radius:50%;border:1.5px solid #f4f4f4"></div>
<div class="a" style="left:1193px;top:492px;width:25px;height:20px;background:#fff;border-radius:2px"></div>
<svg style="left:1196px;top:495px" width="19" height="13" viewBox="0 0 19 13"><path d="M1 12L18 1" stroke="#e83838" stroke-width="1.3"/></svg>
<div class="a" style="left:1218px;top:492px;width:24px;height:20px;background:#000;border:1px solid #333;border-radius:2px"></div>
<div class="a" style="left:1243px;top:492px;width:25px;height:20px;background:#fff;border:1.5px solid #777;border-radius:2px"></div>
<div class="a" style="left:1218px;top:514.7px;width:114px;height:114px;border-radius:50%;background:conic-gradient(from 0deg,#c8f030,#f0f030 25deg,#f8f030 45deg,#f8c830 70deg,#e84030 93deg,#e05090 118deg,#e060f0 140deg,#e060f8 175deg,#b060f8 198deg,#2448f8 216deg,#58c8f8 236deg,#70f0f8 252deg,#70f0f8 305deg,#68e8b0 322deg,#68e020 340deg,#c8f030 360deg)"></div>
<div class="a" style="left:1229.3px;top:526px;width:91.4px;height:91.4px;border-radius:50%;background:#c2c2c2"></div>
<div class="a" style="left:1248px;top:545px;width:54px;height:53px;background:linear-gradient(180deg,rgba(0,0,0,0) 0%,rgba(0,20,40,0.22) 40%,rgba(0,0,0,0.75) 80%,#000 100%),linear-gradient(90deg,#e4e8ee,#60c8f0 70%,#70f0f8)"></div>
<div class="a" style="left:1277.5px;top:563.5px;width:8px;height:8px;background:rgba(0,0,0,0);border:1.3px solid #444"></div>
<div class="a" style="left:1221.5px;top:582.5px;width:8px;height:8px;background:rgba(0,0,0,0);border:1.3px solid #444"></div>
<div class="a" style="left:1207px;top:526px;width:84px;height:19px;background:#c8e4d4;border:0.5px solid #b0c8b8"></div>
<div class="t" style="left:1213px;top:530px;font-size:11.4px;color:#2a4030">Remove color</div>
<svg style="left:1200px;top:504px" width="18" height="20" viewBox="0 0 18 20"><path d="M5 2.5c0-1.5 2.5-1.5 2.5 0V9l1-0.5c0-1.5 2.2-1.5 2.2 0l0.8-0.3c0-1.4 2.2-1.4 2.2 0l.3 0c.2-1.3 2.2-1.3 2.2.2V14c0 2.5-2 4.5-4.5 4.5H9c-1.5 0-2.5-.7-3.4-2L2.2 11.5c-.8-1.2.6-2.5 1.7-1.6L5 11z" fill="#fff" stroke="#111" stroke-width="1"/><path d="M9 12v4M11 12v4M13 12v4" stroke="#111" stroke-width=".8"/></svg>
<div class="t" style="left:1152px;top:646px;font-size:11px;font-weight:bold;color:#1a1a1a;">Opacity</div>
<div class="a" style="left:1200px;top:649px;width:144px;height:5px;background:#b8b8b8;border-radius:3px;border:1px solid #a8a8a8"></div>
<div class="a" style="left:1336px;top:644px;width:15px;height:15px;border-radius:50%;background:#fff;border:1px solid #999"></div>
<div class="a" style="left:1353px;top:641px;width:52px;height:20px;background:#e2e2e2;"></div>
<div class="t" style="left:1357px;top:646px;font-size:11px;font-weight:bold;color:#1a1a1a;font-size:10.5px">100%</div>
<div class="a" style="left:1133px;top:672px;width:282px;height:22px;background:#a9a9a9;"></div>
<div class="a" style="left:1133px;top:694px;width:282px;height:1px;background:#8e8e8e;"></div>
<div class="a" style="left:1233px;top:674px;width:87px;height:21px;background:#c2c2c2;"></div>
<div class="t" style="left:1151px;top:680px;font-size:11px;font-weight:bold;color:#1a1a1a;color:#5e5e5e">Transparency</div>
<div class="t" style="left:1248px;top:680px;font-size:11px;font-weight:bold;color:#1a1a1a;">Appearance</div>
<svg style="left:1393px;top:678px" width="14" height="13" viewBox="0 0 14 13"><g fill="#333"><rect x="0" y="0.5" width="14" height="1.3"/><rect x="0" y="4" width="14" height="1.3"/><rect x="0" y="7.5" width="14" height="1.3"/><rect x="0" y="11" width="14" height="1.3"/></g></svg>
<svg style="left:1155px;top:711px" width="9" height="10" viewBox="0 0 9 10"><path d="M0 0l9 5-9 5z" fill="#222"/></svg>
<div class="t" style="left:1172px;top:711px;font-size:11px;font-weight:bold;color:#1a1a1a;letter-spacing:-0.3px">Fill</div>
<div class="a" style="left:1325px;top:709px;width:14px;height:14px;background:#666;border:1px solid #333"></div>
<div class="a" style="left:1327px;top:711px;width:10px;height:10px;border-radius:50%;background:#c8c8c8;border:1px solid #333"></div>
<div class="a" style="left:1346px;top:705px;width:23px;height:23px;background:#d0d0d0;border-radius:2px"></div>
<div class="a" style="left:1348px;top:707px;width:19px;height:19px;background:#4fb8e6;border:1px solid #2a4a5a"></div>
<svg style="left:1362px;top:721px" width="5" height="5" viewBox="0 0 5 5"><path d="M5 0v5H0z" fill="#333"/></svg>
<svg style="left:1374px;top:711px" width="16" height="11" viewBox="0 0 16 11"><g fill="none" stroke="#222" stroke-width="1.2"><path d="M1 5.5c2-3.3 4.5-4.7 7-4.7s5 1.4 7 4.7c-2 3.3-4.5 4.7-7 4.7s-5-1.4-7-4.7z"/><circle cx="8" cy="5.5" r="2"/></g></svg>
<div class="t" style="left:1172px;top:739px;font-size:11px;font-weight:bold;color:#1a1a1a;">Opacity</div>
<div class="a" style="left:1260px;top:735px;width:66px;height:19px;background:#e2e2e2;"></div>
<div class="t" style="left:1264px;top:740px;font-size:11px;font-weight:bold;color:#1a1a1a;font-size:10.5px">100%</div>
<div class="a" style="left:1326px;top:735px;width:13px;height:19px;background:#cdcdcd;"></div>
<svg style="left:1327px;top:735px" width="11" height="18" viewBox="0 0 11 18"><path d="M2 7l3.5-4L9 7M2 11l3.5 4L9 11" fill="none" stroke="#333" stroke-width="1.3"/></svg>
<div class="a" style="left:1347px;top:735px;width:20px;height:19px;background:#f0f0f0;background-image:linear-gradient(45deg,#d8d8d8 25%,transparent 25%,transparent 75%,#d8d8d8 75%),linear-gradient(45deg,#d8d8d8 25%,transparent 25%,transparent 75%,#d8d8d8 75%);background-size:10px 10px;background-position:0 0,5px 5px"></div>
<div class="a" style="left:1376px;top:738px;width:12px;height:12px;border-radius:50%;border:1px solid #666"></div>
<div class="a" style="left:1395.5px;top:703px;width:11px;height:147px;background:#b3b3b3;border-radius:3px;border:1px solid #c8c8c8"></div>
<div class="a" style="left:1141px;top:859px;width:266px;height:1px;background:#a9a9a9;"></div>
<svg style="left:1141px;top:869px" width="20" height="20" viewBox="0 0 20 20"><rect x="1.5" y="1.5" width="17" height="17" rx="3" fill="none" stroke="#777" stroke-width="1"/><rect x="3.5" y="3.5" width="13" height="13" rx="1" fill="#2a2a2a"/><path d="M10 7v6M7 10h6" stroke="#ddd" stroke-width="1.3"/></svg>
<svg style="left:1169px;top:869px" width="20" height="20" viewBox="0 0 20 20"><rect x="2.5" y="2.5" width="15" height="15" rx="3" fill="none" stroke="#222" stroke-width="1.5"/><path d="M10 6v8M6 10h8" stroke="#222" stroke-width="1.5"/></svg>
<svg style="left:1197px;top:869px" width="20" height="20" viewBox="0 0 20 20"><path d="M3 15l9-10a1.5 1.5 0 0 1 2 2L5 17l-3 1z" fill="#333"/><path d="M14 14v6M11 17h6" stroke="#333" stroke-width="1.6"/></svg>
<svg style="left:1225px;top:869px" width="20" height="20" viewBox="0 0 20 20"><g fill="none" stroke="#444" stroke-width="1"><circle cx="10" cy="10" r="5.5"/><path d="M10 7v6M7 10h6M10 2v2M10 16v2M2 10h2M16 10h2M4.3 4.3l1.4 1.4M14.3 14.3l1.4 1.4M4.3 15.7l1.4-1.4M14.3 5.7l1.4-1.4"/></g></svg>
<svg style="left:1253px;top:869px" width="20" height="20" viewBox="0 0 20 20"><g fill="none" stroke="#444" stroke-width="1"><rect x="2.5" y="2.5" width="15" height="15"/><path d="M2.5 7.5c3 1 4-1 7 0s3 2 8 0M2.5 12.5c3 1 4-1 7 0s3 2 8 0M7.5 2.5c1 3-1 4 0 7s2 3 0 8M12.5 2.5c1 3-1 4 0 7s2 3 0 8"/></g></svg>
<svg style="left:1281px;top:869px" width="20" height="20" viewBox="0 0 20 20"><g fill="none" stroke="#555" stroke-width="1.2"><path d="M2 6.5h4l1.5-2h5l1.5 2h4v10H2z"/><circle cx="10" cy="11" r="3.5"/></g></svg>
<svg style="left:1330px;top:869px" width="20" height="20" viewBox="0 0 20 20"><g fill="none" stroke="#999" stroke-width="1"><rect x="2.5" y="5.5" width="12" height="12"/><path d="M5.5 2.5h12v12M8.5 8.5v6M5.5 11.5h6"/></g></svg>
<svg style="left:1359px;top:869px" width="20" height="20" viewBox="0 0 20 20"><g fill="none" stroke="#222" stroke-width="1.2"><circle cx="10" cy="10" r="8"/><path d="M7 7l6 6M13 7l-6 6"/></g></svg>
<svg style="left:1387px;top:869px" width="20" height="20" viewBox="0 0 20 20"><g fill="none" stroke="#222" stroke-width="1.4"><path d="M3 5h14M7.5 5V3h5v2M4.5 5l1 13h9l1-13M8 8v7M10 8v7M12 8v7"/></g></svg>
<div class="a" style="left:1418.5px;top:155px;width:20.5px;height:18px;background:#fff;"></div>
<svg style="left:1420px;top:157px" width="17" height="14" viewBox="0 0 17 14"><path d="M2 13L15 1" stroke="#e33" stroke-width="1.2"/></svg>
<div class="a" style="left:1418.5px;top:173px;width:20.5px;height:18px;background:#f5c8b0;"></div>
<div class="a" style="left:1418.5px;top:191px;width:20.5px;height:18px;background:#f0c0b2;"></div>
<div class="a" style="left:1418.5px;top:209px;width:20.5px;height:18px;background:#e8b4d0;"></div>
<div class="a" style="left:1418.5px;top:227px;width:20.5px;height:18px;background:#f09a9c;"></div>
<div class="a" style="left:1418.5px;top:245px;width:20.5px;height:18px;background:#f5ac98;"></div>
<div class="a" style="left:1418.5px;top:263px;width:20.5px;height:18px;background:#f0a282;"></div>
<div class="a" style="left:1418.5px;top:281px;width:20.5px;height:18px;background:#f5b284;"></div>
<div class="a" style="left:1418.5px;top:299px;width:20.5px;height:18px;background:#f5c482;"></div>
<div class="a" style="left:1418.5px;top:317px;width:20.5px;height:18px;background:#f2d884;"></div>
<div class="a" style="left:1418.5px;top:335px;width:20.5px;height:18px;background:#d8e080;"></div>
<div class="a" style="left:1418.5px;top:353px;width:20.5px;height:18px;background:#c6e07a;"></div>
<div class="a" style="left:1418.5px;top:371px;width:20.5px;height:18px;background:#b8d87a;"></div>
<div class="a" style="left:1418.5px;top:389px;width:20.5px;height:18px;background:#a0d682;"></div>
<div class="a" style="left:1418.5px;top:407px;width:20.5px;height:18px;background:#88d084;"></div>
<div class="a" style="left:1418.5px;top:425px;width:20.5px;height:18px;background:#6ed0a2;"></div>
<div class="a" style="left:1418.5px;top:443px;width:20.5px;height:18px;background:#68cec0;"></div>
<div class="a" style="left:1418.5px;top:461px;width:20.5px;height:18px;background:#78d0d0;"></div>
<div class="a" style="left:1418.5px;top:479px;width:20.5px;height:18px;background:#70c8d2;"></div>
<div class="a" style="left:1418.5px;top:497px;width:20.5px;height:18px;background:#80c4d4;"></div>
<div class="a" style="left:1418.5px;top:515px;width:20.5px;height:18px;background:#88c8d8;"></div>
<div class="a" style="left:1418.5px;top:533px;width:20.5px;height:18px;background:#a8c8e0;"></div>
<div class="a" style="left:1418.5px;top:551px;width:20.5px;height:18px;background:#c0c8e0;"></div>
<div class="a" style="left:1418.5px;top:569px;width:20.5px;height:18px;background:#d8b0d0;"></div>
<div class="a" style="left:1418.5px;top:587px;width:20.5px;height:18px;background:#e8a8c8;"></div>
<div class="a" style="left:1418.5px;top:605px;width:20.5px;height:18px;background:#f088a8;"></div>
<div class="a" style="left:1418.5px;top:623px;width:20.5px;height:18px;background:#f090b0;"></div>
<div class="a" style="left:1418.5px;top:641px;width:20.5px;height:18px;background:#e870a0;"></div>
<div class="a" style="left:1418.5px;top:659px;width:20.5px;height:18px;background:#f07090;"></div>
<div class="a" style="left:1418.5px;top:677px;width:20.5px;height:18px;background:#f08090;"></div>
<div class="a" style="left:1418.5px;top:695px;width:20.5px;height:18px;background:#f09070;"></div>
<div class="a" style="left:1418.5px;top:713px;width:20.5px;height:18px;background:#f5a870;"></div>
<div class="a" style="left:1418.5px;top:731px;width:20.5px;height:18px;background:#f5c070;"></div>
<div class="a" style="left:1418.5px;top:749px;width:20.5px;height:18px;background:#f8d850;"></div>
<div class="a" style="left:1418.5px;top:767px;width:20.5px;height:18px;background:#d8d848;"></div>
<div class="a" style="left:1418.5px;top:785px;width:20.5px;height:18px;background:#b0d860;"></div>
<div class="a" style="left:1418.5px;top:803px;width:20.5px;height:18px;background:#88d068;"></div>
<div class="a" style="left:1418.5px;top:821px;width:20.5px;height:18px;background:#78d080;"></div>
<div class="a" style="left:1418.5px;top:839px;width:20.5px;height:18px;background:#60c890;"></div>
<div class="a" style="left:1418.5px;top:857px;width:20.5px;height:18px;background:#60c8a0;"></div>
<svg style="left:1420px;top:118px" width="18" height="10" viewBox="0 0 18 10"><g fill="#333"><rect x="1" y="2" width="2" height="2"/><rect x="5" y="2" width="2" height="2"/><rect x="9" y="2" width="2" height="2"/><rect x="13" y="2" width="2" height="2"/><rect x="1" y="6" width="2" height="2"/><rect x="5" y="6" width="2" height="2"/><rect x="9" y="6" width="2" height="2"/><rect x="13" y="6" width="2" height="2"/></g></svg>
<svg style="left:1420px;top:134px" width="18" height="18" viewBox="0 0 18 18"><g fill="none" stroke="#333" stroke-width="1.3"><circle cx="3.5" cy="4" r="2"/><circle cx="3.5" cy="13" r="2"/><path d="M7 3h10M7 6h10M7 12h10M7 15h10"/></g></svg>
<svg style="left:1420px;top:877px" width="18" height="18" viewBox="0 0 18 18"><path d="M2 1.5h14a1 1 0 0 1 1 1v9a1 1 0 0 1-1 1h-5l-2 3-2-3H2a1 1 0 0 1-1-1v-9a1 1 0 0 1 1-1z" fill="#f4f4f4" stroke="#333" stroke-width="1"/><path d="M4 5h10M4 7.5h10M4 10h10" stroke="#333" stroke-width=".9"/></svg>

<!-- /RIGHTCONTENT -->
<!-- ANNOT -->
<svg style="left:0;top:0;pointer-events:none" width="1440" height="900" viewBox="0 0 1440 900">
<defs><filter id="rough" x="-5%" y="-5%" width="110%" height="110%"><feTurbulence type="fractalNoise" baseFrequency="0.9" numOctaves="2" seed="3" result="n"/><feDisplacementMap in="SourceGraphic" in2="n" scale="5" result="d"/><feTurbulence type="fractalNoise" baseFrequency="1.1" numOctaves="1" seed="11" result="n2"/><feColorMatrix in="n2" type="matrix" values="0 0 0 0 0  0 0 0 0 0  0 0 0 0 0  7 0 0 0 -1.9" result="mask"/><feComposite in="d" in2="mask" operator="in"/></filter></defs>
<g filter="url(#rough)" fill="none" stroke="#f6e800" stroke-linecap="round" stroke-linejoin="round">
<path d="M729 519.5C800 519 900 520 1000 519.5L1040 519.5" stroke-width="9" stroke-linecap="butt"/>
<path d="M1034 498L1070 519.5L1033 543C1036 528 1036 512 1034 498z" fill="#f6e800" stroke-width="7"/>
<path d="M1117 482H1334A28.5 28.5 0 0 1 1362.5 510.5V611A22 22 0 0 1 1340.5 633H1122A23 23 0 0 1 1099 610V499A17 17 0 0 1 1117 482z" stroke-width="10"/>
</g></svg>
<!-- /ANNOT -->
</body></html>
